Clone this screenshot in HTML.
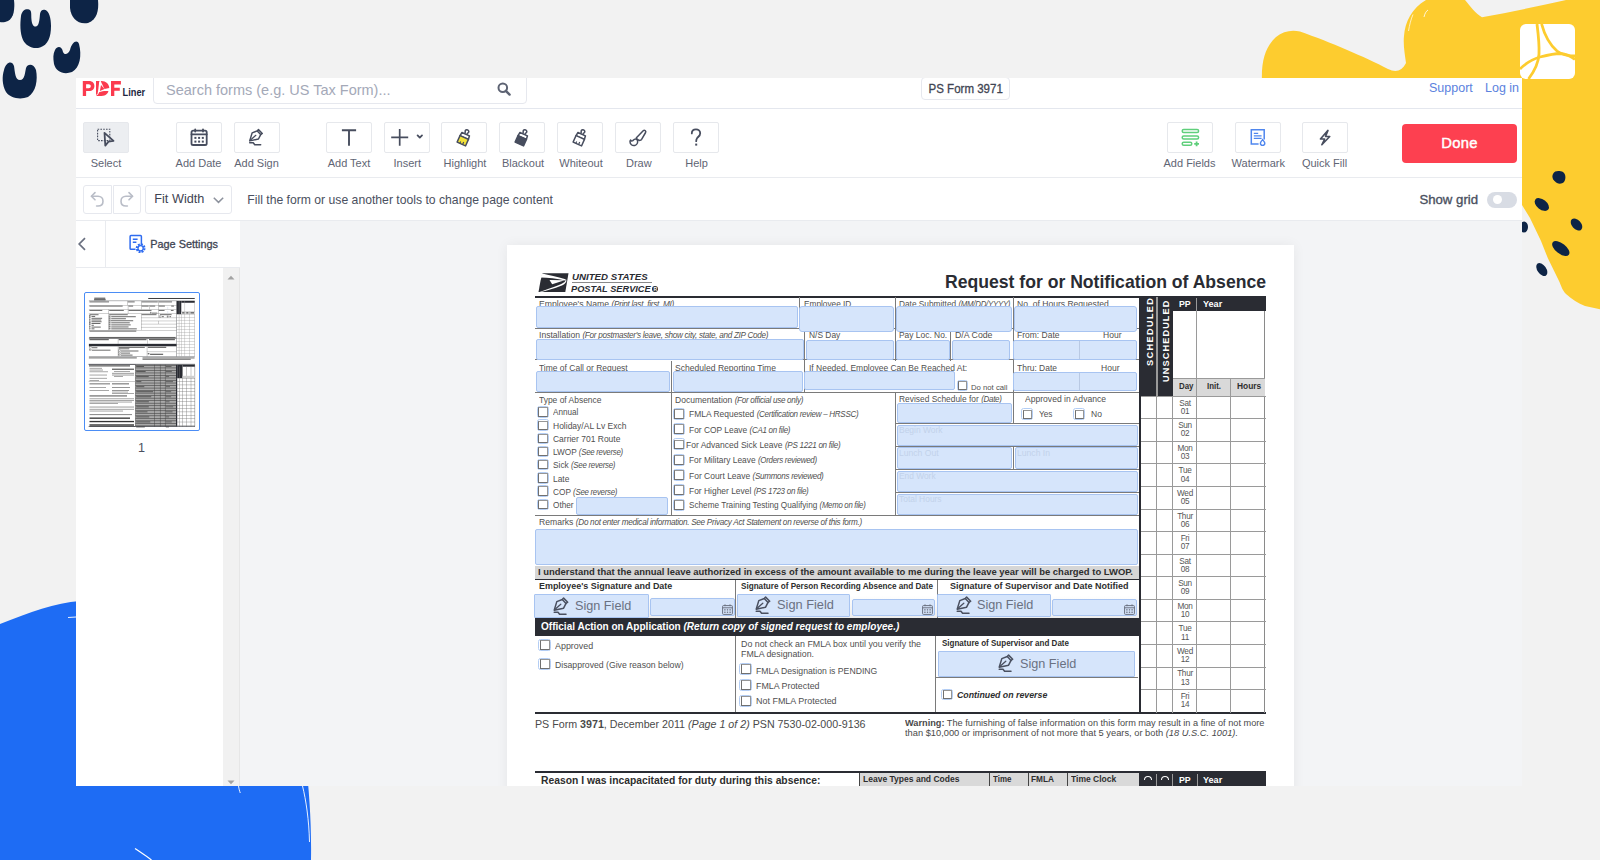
<!DOCTYPE html>
<html><head><meta charset="utf-8">
<style>
*{box-sizing:border-box;margin:0;padding:0}
html,body{width:1600px;height:860px;overflow:hidden}
body{background:#f2f2f2;position:relative;font-family:"Liberation Sans",sans-serif;color:#333}
.abs{position:absolute}
.a{position:absolute}
.t{position:absolute;white-space:nowrap;transform-origin:0 0}
#deco{position:absolute;left:0;top:0;width:1600px;height:860px}
#app{position:absolute;left:76px;top:78px;width:1446px;height:708px;background:#fff;overflow:hidden}
#hdr{position:absolute;left:0;top:0;width:1446px;height:31px;border-bottom:1px solid #e4e7ee}
#tb{position:absolute;left:0;top:31px;width:1446px;height:69px;border-bottom:1px solid #e9ebef}
#stb{position:absolute;left:0;top:100px;width:1446px;height:43px;border-bottom:1px solid #e9ebef}
#side{position:absolute;left:0;top:143px;width:164px;height:565px;background:#fff}
#main{position:absolute;left:164px;top:143px;width:1282px;height:565px;background:#f3f4f6;overflow:hidden}
.btn{position:absolute;top:13px;width:46px;height:31px;border:1px solid #e6e8ec;border-radius:2px;background:#fff}
.lbl{position:absolute;top:48px;font-size:11px;line-height:13px;color:#5f6574;white-space:nowrap;text-align:center}
.ico{position:absolute;left:-1px;top:-1px}
</style></head><body>
<svg id="deco" viewBox="0 0 1600 860">
  <!-- navy blobs top-left -->
  <g fill="#0d2446">
    <path d="M0 0 L14 0 C15 8 14 18 8 21 C4 23 0 22 0 22 Z"/>
    <path d="M21 16 C22 10 26 8.5 29 9.5 C32 10.5 31 14 31.5 20 C32 25 34 27 36 26.5 C39 26 39.5 20 40 14 C40.5 10 43 9 45.5 10 C49 11.5 51 18 51 26 C51 37 48 45 40 47.5 C33 49.5 26 46 23 40 C20 33 20 24 21 16 Z"/>
    <path d="M70 0 L98 0 C99 10 97 20 88 23 C78 25 71 18 70 8 Z"/>
    <path d="M55 50 C58 45 62 47 63 52 C64 55 68 55 70 50 C72 42 77 39 79 44 C82 55 80 68 72 72 C64 75 56 72 54 64 C53 58 53 54 55 50 Z"/>
    <path d="M4 70 C6 62 12 60 14 66 C15 72 15 80 20 80 C25 80 25 72 26 68 C28 63 34 64 36 70 C38 80 36 92 28 97 C20 100 10 98 6 92 C2 85 2 76 4 70 Z"/>
  </g>
  <!-- yellow blob top-right -->
  <path fill="#fdcc2f" d="M1262 82 C1261 60 1266 46 1276 37 C1283 31 1292 29.5 1300 31.5 C1330 42 1365 57 1388 69 C1396 73 1402 71 1406 63 C1405 55 1403 45 1404 36 C1405 22 1412 8 1426 0 L1465 0 C1470 6 1476 14 1482 17.2 C1510 12 1540 6 1566 0 L1600 0 L1600 309.3 L1585 306 C1578 303 1572 299.5 1566 294 C1562 290 1561 285 1559 281 L1548 258.6 L1541 241 L1530 218 L1522 205 L1522 82 Z"/>
  <path d="M1413 14.5 C1411 19 1409.5 25 1408.5 31" stroke="#fff" stroke-width="0.7" fill="none"/>
  <path d="M1428 10 C1426 11.5 1425 13 1424 17" stroke="#fff" stroke-width="0.8" fill="none"/>
  <!-- white pdf square -->
  <g transform="translate(1520 24)">
    <rect x="0" y="0" width="55" height="55" rx="6" fill="#fff"/>
    <g stroke="#fdcc2f" stroke-width="2.8" fill="none">
      <path d="M17 0 C18 8 19.5 20 19 30 C18.5 40 13 49 8.5 55"/>
      <path d="M21.6 0 C24 9 29 20 37 27 C42 31 48 32 55 32"/>
      <path d="M0 45 C6 39 13 35 20 33 C28 31 35 29.5 40 29.5 C46 30 51 32 55 35.5"/>
    </g>
  </g>
  <!-- navy dots right -->
  <g fill="#0d2446">
    <path d="M1553 174 C1555 170 1560 171 1563 172 C1566 174 1566 179 1564 182 C1562 184 1559 184 1557 183 C1554 181 1551 178 1553 174 Z"/>
    <ellipse cx="1541.8" cy="204.5" rx="8.2" ry="5" transform="rotate(38 1541.8 204.5)"/>
    <ellipse cx="1576.5" cy="224.5" rx="7" ry="4.6" transform="rotate(48 1576.5 224.5)"/>
    <ellipse cx="1560.8" cy="248.5" rx="10.2" ry="5.2" transform="rotate(38 1560.8 248.5)"/>
    <ellipse cx="1541.8" cy="269.5" rx="7.4" ry="4.4" transform="rotate(55 1541.8 269.5)"/>
    <ellipse cx="1524" cy="227" rx="4" ry="5.5"/>
  </g>
  <!-- blue blob bottom-left -->
  <path fill="#1e6cf4" d="M0 624 C30 612 55 603 80 601 L300 700 C305 760 312 800 311 860 L0 860 Z"/>
  <g stroke="#fff" fill="none" stroke-width="0.9">
    <path d="M68 617.5 L76 617"/>
    <path d="M302.5 786 C306 800 309 820 309.5 842"/>
    <path d="M238.5 786 C239 789 239.5 791 240.3 793"/>
    <path d="M135 848.5 C140 852 146 856 151.5 860" stroke-width="1.2"/>
  </g>
</svg>

<div id="app">
  <div id="hdr">
    <div class="abs" style="left:6px;top:2px;width:66px;height:18px">
      <svg width="66" height="18" viewBox="0 0 66 18">
        <g fill="#fb3a4e">
          <path d="M0.8 1 H7 C10.6 1 12.4 3.2 12.4 6 C12.4 9 10.4 11.1 7 11.1 H4.1 V16 H0.8 Z M4.1 4.3 V8.2 H6.6 C8 8.2 8.8 7.4 8.8 6.2 C8.8 5 8 4.3 6.6 4.3 Z"/>
          <path d="M14 1 H17 L17.2 1.2 C16.8 6 16.2 10.5 15.6 13.6 L14 15.2 Z"/>
          <path d="M14 16 L16.2 14.2 C16.6 13.4 17 12.6 17.4 12 C20 11 24 10.6 26.4 11.1 C26 13.5 24 16 19.5 16 Z"/>
          <path d="M19.5 1 C24 1 27 4 27.3 8 L22.5 9 C20.8 6 19.6 3.2 18.8 1.1 Z"/>
          <path d="M19 5 L22.5 9 L17.9 11.1 Z"/>
          <path d="M29 1 H38.9 V4.5 H32.3 V7.8 H37.8 V10.7 H32.3 V16 H29 Z"/>
        </g>
        <text x="40.6" y="15.7" font-family="Liberation Sans" font-weight="bold" font-size="10.2" fill="#1d2640" textLength="22.5" lengthAdjust="spacingAndGlyphs">Liner</text>
      </svg>
    </div>
    <div class="abs" style="left:77px;top:-6px;width:374px;height:32px;border:1px solid #e6e8ee;border-radius:4px;background:#fff"></div>
    <div class="abs" style="left:90px;top:4px;font-size:14.5px;color:#a4a9b8;white-space:nowrap">Search forms (e.g. US Tax Form)...</div>
    <svg class="abs" style="left:421px;top:4px" width="14" height="14" viewBox="0 0 14 14"><circle cx="5.8" cy="5.8" r="4.3" stroke="#5d6373" stroke-width="2" fill="none"/><path d="M8.8 8.8 L12.6 12.6" stroke="#5d6373" stroke-width="2.4" stroke-linecap="round"/></svg>
    <div class="abs" style="left:845px;top:-1px;width:89px;height:23px;border:1px solid #e6e8ee;border-radius:4px;background:#fff;font-size:12px;-webkit-text-stroke:0.3px #3f4553;color:#3f4553;text-align:center;line-height:22px"><span style="display:inline-block;transform:scaleX(0.96)">PS Form 3971</span></div>
    <div class="abs" style="left:1353px;top:3px;font-size:12.5px;color:#5b82de;white-space:nowrap">Support</div>
    <div class="abs" style="left:1409px;top:3px;font-size:12.5px;color:#5b82de;white-space:nowrap">Log in</div>
  </div>
  <div id="tb">
    <div class="btn" style="left:7px;background:#eceef1"><svg class="ico" width="46" height="31" viewBox="0 0 46 31"><rect x="14.6" y="7.2" width="12.2" height="11.4" stroke="#474d5e" stroke-width="1.1" stroke-dasharray="1.6 1.2" fill="none"/><path d="M21.5 10.8 L30.5 18.8 L25.5 19.6 L22.3 23.6 Z" stroke="#474d5e" fill="none" stroke-width="1.8" stroke-linecap="round" stroke-linejoin="round" stroke-width="1.9" fill="#eceef2"/></svg></div>
    <div class="lbl" style="left:-10.0px;width:80px">Select</div>
    <div class="btn" style="left:99.5px;background:#fff"><svg class="ico" width="46" height="31" viewBox="0 0 46 31"><rect x="15.5" y="8.6" width="15.2" height="14.4" rx="1.6" stroke="#474d5e" fill="none" stroke-width="1.8" stroke-linecap="round" stroke-linejoin="round"/><path d="M15.5 12.3 H30.7" stroke="#474d5e" fill="none" stroke-width="1.8" stroke-linecap="round" stroke-linejoin="round" stroke-width="1.4"/><path d="M19.2 7.3 V9.5 M27 7.3 V9.5" stroke="#474d5e" fill="none" stroke-width="1.8" stroke-linecap="round" stroke-linejoin="round" stroke-width="1.4"/><g fill="#474d5e"><rect x="18.4" y="14.9" width="2" height="2"/><rect x="22.1" y="14.9" width="2" height="2"/><rect x="25.8" y="14.9" width="2" height="2"/><rect x="18.4" y="18.6" width="2" height="2"/><rect x="22.1" y="18.6" width="2" height="2"/><rect x="25.8" y="18.6" width="2" height="2"/></g></svg></div>
    <div class="lbl" style="left:82.5px;width:80px">Add Date</div>
    <div class="btn" style="left:157.5px;background:#fff"><svg class="ico" width="46" height="31" viewBox="0 0 46 31"><g transform="translate(14.6 6.6) scale(0.93)" fill="none" stroke="#474d5e" stroke-linecap="round" stroke-linejoin="round" stroke-width="1.6"><path d="M1.2 13.2 L3.8 4.6 L9.3 2.5 L10.6 1.1 L14.7 5.2 L13 6.4 L10.6 11.2 Z"/><path d="M9.3 2.5 L13 6.4"/><path d="M1.8 12.6 L7.8 7.2" stroke-width="1.3"/><path d="M1.2 15.2 H5 L6.6 17.3 H13"/></g></svg></div>
    <div class="lbl" style="left:140.5px;width:80px">Add Sign</div>
    <div class="btn" style="left:250px;background:#fff"><svg class="ico" width="46" height="31" viewBox="0 0 46 31"><path d="M15.9 8.2 H30.1 M23 8.2 V23.8" stroke="#474d5e" stroke-width="1.9" fill="none"/></svg></div>
    <div class="lbl" style="left:233.0px;width:80px">Add Text</div>
    <div class="btn" style="left:308.3px;background:#fff"><svg class="ico" width="46" height="31" viewBox="0 0 46 31"><path d="M7.2 15.4 H24.2 M15.7 7 V23.8" stroke="#474d5e" stroke-width="1.7" fill="none"/><path d="M33.6 13.4 L35.8 15.6 L38 13.4" stroke="#474d5e" fill="none" stroke-width="1.8" stroke-linecap="round" stroke-linejoin="round" stroke-width="1.5"/></svg></div>
    <div class="lbl" style="left:291.3px;width:80px">Insert</div>
    <div class="btn" style="left:365.2px;background:#fff"><svg class="ico" width="46" height="31" viewBox="0 0 46 31"><g transform="rotate(24 23 16)"><path d="M21.8 11.6 V10 C20.9 9.4 20.9 7.8 22.4 7.3 C23.8 6.9 25.2 7.8 24.9 9.2 C24.8 9.6 24.6 9.9 24.3 10 V11.6" stroke="#474d5e" stroke-width="1.5" stroke-linecap="round" stroke-linejoin="round" fill="none"/><path d="M18.9 11.8 H27.1 L27.6 15.4 H18.4 Z" stroke="#474d5e" stroke-width="1.5" stroke-linecap="round" stroke-linejoin="round" fill="#fff"/><path d="M18.4 15.4 H27.6 V22.6 H18.4 Z" stroke="#474d5e" stroke-width="1.5" stroke-linecap="round" stroke-linejoin="round" fill="#f2e23a"/><path d="M21.4 22.6 V20.6 M24.4 22.6 V19.8" stroke="#474d5e" stroke-width="1.2"/></g></svg></div>
    <div class="lbl" style="left:349.0px;width:80px">Highlight</div>
    <div class="btn" style="left:423.2px;background:#fff"><svg class="ico" width="46" height="31" viewBox="0 0 46 31"><g transform="rotate(24 23 16)"><path d="M21.8 11.6 V10 C20.9 9.4 20.9 7.8 22.4 7.3 C23.8 6.9 25.2 7.8 24.9 9.2 C24.8 9.6 24.6 9.9 24.3 10 V11.6" stroke="#474d5e" stroke-width="1.5" stroke-linecap="round" stroke-linejoin="round" fill="none"/><path d="M18.9 11.8 H27.1 L27.6 15.4 H18.4 Z" stroke="#474d5e" stroke-width="1.5" stroke-linecap="round" stroke-linejoin="round" fill="#fff"/><path d="M18.4 15.4 H27.6 V22.6 H18.4 Z" stroke="#474d5e" stroke-width="1.5" stroke-linecap="round" stroke-linejoin="round" fill="#474d5e"/></g></svg></div>
    <div class="lbl" style="left:407.0px;width:80px">Blackout</div>
    <div class="btn" style="left:481.2px;background:#fff"><svg class="ico" width="46" height="31" viewBox="0 0 46 31"><g transform="rotate(24 23 16)"><path d="M21.8 11.6 V10 C20.9 9.4 20.9 7.8 22.4 7.3 C23.8 6.9 25.2 7.8 24.9 9.2 C24.8 9.6 24.6 9.9 24.3 10 V11.6" stroke="#474d5e" stroke-width="1.5" stroke-linecap="round" stroke-linejoin="round" fill="none"/><path d="M18.9 11.8 H27.1 L27.6 15.4 H18.4 Z" stroke="#474d5e" stroke-width="1.5" stroke-linecap="round" stroke-linejoin="round" fill="#fff"/><path d="M18.4 15.4 H27.6 V22.6 H18.4 Z" stroke="#474d5e" stroke-width="1.5" stroke-linecap="round" stroke-linejoin="round" fill="#fff"/><path d="M21.4 22.6 V20.6 M24.4 22.6 V19.8" stroke="#474d5e" stroke-width="1.2"/></g></svg></div>
    <div class="lbl" style="left:465.0px;width:80px">Whiteout</div>
    <div class="btn" style="left:539.2px;background:#fff"><svg class="ico" width="46" height="31" viewBox="0 0 46 31"><path d="M21.4 15.8 L28.2 8.8 C29.4 7.6 31.4 8.8 30.6 10.5 L26.6 17.3 C25.8 18.5 24.2 18.7 23.2 17.9 L21.8 16.9 Z" stroke="#474d5e" fill="none" stroke-width="1.5" stroke-linejoin="round"/><path d="M22.2 17.8 C23.2 19.8 22.6 22.8 19.8 23.4 C17.2 24 15 22.2 15 19.8 C15 19 15.2 18.4 15.6 18 C16 19 17 19.2 17.8 18.6 C18.6 17.8 19.4 17 20.6 17 C21.2 17 21.8 17.3 22.2 17.8 Z" stroke="#474d5e" fill="none" stroke-width="1.5" stroke-linejoin="round"/></svg></div>
    <div class="lbl" style="left:522.8px;width:80px">Draw</div>
    <div class="btn" style="left:597px;background:#fff"><svg class="ico" width="46" height="31" viewBox="0 0 46 31"><path d="M18.8 11.4 C18.8 8.6 20.6 7.4 23 7.4 C25.4 7.4 27.2 9 27.2 11.2 C27.2 13.8 25.4 14.6 24.2 16 C23.4 17 23.2 18 23.2 19.2" stroke="#474d5e" stroke-width="1.8" fill="none" stroke-linecap="round"/><rect x="22.2" y="21.6" width="2" height="2" fill="#474d5e"/></svg></div>
    <div class="lbl" style="left:580.6px;width:80px">Help</div>
    <div class="btn" style="left:1090.5px;background:#fff"><svg class="ico" width="46" height="31" viewBox="0 0 46 31"><g stroke="#5fcf7b" stroke-width="1.5" fill="none"><rect x="15.2" y="7.6" width="16.4" height="3" rx="1.5"/><rect x="15.2" y="13.9" width="16.4" height="3" rx="1.5"/><rect x="15.2" y="20.2" width="9.6" height="3" rx="1.5"/></g><path d="M29.6 19.4 V24.2 M27.2 21.8 H32" stroke="#5fcf7b" stroke-width="1.8"/></svg></div>
    <div class="lbl" style="left:1073.5px;width:80px">Add Fields</div>
    <div class="btn" style="left:1159.3px;background:#fff"><svg class="ico" width="46" height="31" viewBox="0 0 46 31"><path d="M29.2 17.6 V7.7 H16.3 V22 H23.6" stroke="#4f86ee" stroke-width="1.5" fill="none"/><path d="M18.8 11.4 H23.2 M18.8 13.9 H26.6 M18.8 16.4 H26.6" stroke="#4f86ee" stroke-width="1.2"/><path d="M27.6 17.6 C29 19.2 29.8 20.2 29.8 21.3 C29.8 22.6 28.8 23.4 27.6 23.4 C26.4 23.4 25.4 22.6 25.4 21.3 C25.4 20.2 26.2 19.2 27.6 17.6 Z" stroke="#4f86ee" stroke-width="1.4" fill="#fff"/></svg></div>
    <div class="lbl" style="left:1142.3px;width:80px">Watermark</div>
    <div class="btn" style="left:1225.5px;background:#fff"><svg class="ico" width="46" height="31" viewBox="0 0 46 31"><path transform="translate(23 15.5) scale(0.88) translate(-23 -15.5)" d="M26.4 7.4 L17.8 17.2 H22.6 L19.4 23.8 L28.4 14.4 H23.6 Z" stroke="#474d5e" fill="none" stroke-width="1.8" stroke-linecap="round" stroke-linejoin="round" stroke-width="1.35"/></svg></div>
    <div class="lbl" style="left:1208.5px;width:80px">Quick Fill</div>
    <div class="abs" style="left:1325.9px;top:15.1px;width:115.3px;height:38.7px;background:#fd4050;border-radius:4px;color:#fff;font-size:14.8px;letter-spacing:0.3px;-webkit-text-stroke:0.45px #fff;text-align:center;line-height:38px">Done</div>
  </div>
  <div id="stb">
    <div class="abs" style="left:7px;top:7px;width:29px;height:29.3px;border:1px solid #e6e8ee;border-radius:3px 0 0 3px"></div>
    <div class="abs" style="left:36.5px;top:7px;width:28px;height:29.3px;border:1px solid #e6e8ee;border-radius:0 3px 3px 0"></div>
    <svg class="abs" style="left:13px;top:12px" width="18" height="18" viewBox="0 0 18 18"><path d="M6 2.6 L2.4 6.2 L6 9.8" stroke="#b9bdc7" stroke-width="1.6" fill="none" stroke-linecap="round" stroke-linejoin="round"/><path d="M2.6 6.2 H9 C12 6.2 14 8.4 14 11.2 C14 14 12 16 9 16 H7.6" stroke="#b9bdc7" stroke-width="1.6" fill="none" stroke-linecap="round"/></svg>
    <svg class="abs" style="left:41px;top:12px" width="18" height="18" viewBox="0 0 18 18"><path d="M12 2.6 L15.6 6.2 L12 9.8" stroke="#b9bdc7" stroke-width="1.6" fill="none" stroke-linecap="round" stroke-linejoin="round"/><path d="M15.4 6.2 H9 C6 6.2 4 8.4 4 11.2 C4 14 6 16 9 16 H10.4" stroke="#b9bdc7" stroke-width="1.6" fill="none" stroke-linecap="round"/></svg>
    <div class="abs" style="left:69.3px;top:7px;width:86.8px;height:29.3px;border:1px solid #e6e8ee;border-radius:3px"></div>
    <div class="abs" style="left:78.3px;top:13px;font-size:12.7px;line-height:16px;color:#3f4553;white-space:nowrap">Fit Width</div>
    <svg class="abs" style="left:137px;top:19px" width="11" height="7" viewBox="0 0 11 7"><path d="M0.8 0.8 L5.5 5.4 L10.2 0.8" stroke="#8d929d" stroke-width="1.5" fill="none"/></svg>
    <div class="abs" style="left:171.3px;top:13.5px;font-size:12.2px;line-height:16px;color:#4a5060;white-space:nowrap">Fill the form or use another tools to change page content</div>
    <div class="abs" style="left:1343.4px;top:13.5px;font-size:13.2px;line-height:16px;-webkit-text-stroke:0.35px #4a5060;color:#4a5060;white-space:nowrap">Show grid</div>
    <div class="abs" style="left:1410.6px;top:14px;width:30.4px;height:15.5px;border-radius:8px;background:#d8dce4"><div class="abs" style="left:6px;top:3.1px;width:9.3px;height:9.3px;border-radius:50%;background:#fff"></div></div>
  </div>
  <div id="side">
    <div class="abs" style="left:0;top:0;width:164px;height:47px;border-bottom:1px solid #e9ebef"></div>
    <div class="abs" style="left:29px;top:0;width:1px;height:47px;background:#e9ebef"></div>
    <svg class="abs" style="left:1px;top:16px" width="10" height="14" viewBox="0 0 10 14"><path d="M8 1.2 L2.2 7 L8 12.8" stroke="#6a7080" stroke-width="1.7" fill="none"/></svg>
    <svg class="abs" style="left:53px;top:13px" width="20" height="20" viewBox="0 0 20 20">
      <path d="M12.4 11 V2.4 C12.4 1.9 12 1.5 11.5 1.5 H2 C1.5 1.5 1.1 1.9 1.1 2.4 V14.4 C1.1 14.9 1.5 15.3 2 15.3 H6.5" stroke="#2f6cf0" stroke-width="1.5" fill="none"/>
      <path d="M3.8 5.2 H8.6 M3.8 8.2 H7.4" stroke="#2f6cf0" stroke-width="1.4"/>
      <circle cx="11.6" cy="14.2" r="3.6" stroke="#2f6cf0" stroke-width="2.6" stroke-dasharray="1.8 1" fill="none"/>
      <circle cx="11.6" cy="14.2" r="2.6" stroke="#2f6cf0" stroke-width="1.3" fill="#fff"/>
    </svg>
    <div class="abs" style="left:74.2px;top:16.5px;font-size:10.9px;line-height:13px;-webkit-text-stroke:0.3px #3f4553;color:#3f4553;white-space:nowrap">Page Settings</div>
    <div class="abs" style="left:147.2px;top:47px;width:16.8px;height:518px;background:#f1f1f1;border-right:1px solid #e6e6e6"></div>
    <svg class="abs" style="left:151px;top:54px" width="8" height="5" viewBox="0 0 8 5"><path d="M0.5 4.5 L4 0.8 L7.5 4.5 Z" fill="#a3a3a3"/></svg>
    <svg class="abs" style="left:151px;top:558.5px" width="8" height="5" viewBox="0 0 8 5"><path d="M0.5 0.5 L4 4.2 L7.5 0.5 Z" fill="#a3a3a3"/></svg>
    <div class="abs" style="left:7.5px;top:71px;width:116.2px;height:139.2px;border:1.5px solid #4b8df5;border-radius:2px;background:#fff"><svg id="thumb" class="abs" style="left:3px;top:3px" width="108" height="130" viewBox="0 0 108 130"></svg></div>
    <div class="abs" style="left:60px;top:220px;width:11px;text-align:center;font-size:12.6px;line-height:14px;color:#4a5060">1</div>
  </div>
  <div id="main">
    <div id="page" class="abs" style="left:267px;top:24px;width:787px;height:600px;background:#fff;box-shadow:0 0 12px rgba(0,0,0,0.06)"></div>
  </div>
</div>
<!--TH--><svg style="position:absolute;left:85px;top:293.5px" width="114" height="137" viewBox="85 293.5 114 137"><rect x="94.29" y="297.19" width="10.95" height="1.00" fill="#333" opacity="0.95"/><rect x="94.26" y="298.36" width="11.59" height="0.35" fill="#8a8a8a" opacity="1"/><rect x="94.06" y="298.78" width="11.55" height="1.00" fill="#333" opacity="0.95"/><rect x="148.24" y="297.48" width="46.51" height="1.00" fill="#333" opacity="0.95"/><rect x="88.90" y="300.23" width="87.66" height="0.35" fill="#2a2c33" opacity="1"/><rect x="88.90" y="304.51" width="87.66" height="0.35" fill="#7a7a7a" opacity="1"/><rect x="88.90" y="308.66" width="87.66" height="0.35" fill="#7a7a7a" opacity="1"/><rect x="88.90" y="313.08" width="87.66" height="0.35" fill="#7a7a7a" opacity="1"/><rect x="127.15" y="300.37" width="0.35" height="4.28" fill="#7a7a7a" opacity="1"/><rect x="141.06" y="300.37" width="0.35" height="8.56" fill="#7a7a7a" opacity="1"/><rect x="141.06" y="313.13" width="0.35" height="16.47" fill="#7a7a7a" opacity="1"/><rect x="158.16" y="300.37" width="0.35" height="12.84" fill="#7a7a7a" opacity="1"/><rect x="127.88" y="304.65" width="0.35" height="8.56" fill="#7a7a7a" opacity="1"/><rect x="149.03" y="304.65" width="0.35" height="4.28" fill="#7a7a7a" opacity="1"/><rect x="108.61" y="308.93" width="0.35" height="20.67" fill="#7a7a7a" opacity="1"/><rect x="89.45" y="300.92" width="19.56" height="0.96" fill="#333" opacity="0.75"/><rect x="127.83" y="300.92" width="6.85" height="0.96" fill="#333" opacity="0.75"/><rect x="141.69" y="300.92" width="16.11" height="0.96" fill="#333" opacity="0.75"/><rect x="158.74" y="300.92" width="13.30" height="0.96" fill="#333" opacity="0.75"/><rect x="89.45" y="305.12" width="33.21" height="0.96" fill="#333" opacity="0.75"/><rect x="128.57" y="305.12" width="4.54" height="0.96" fill="#333" opacity="0.75"/><rect x="141.69" y="305.12" width="6.98" height="0.96" fill="#333" opacity="0.75"/><rect x="149.76" y="305.12" width="5.43" height="0.96" fill="#333" opacity="0.75"/><rect x="158.74" y="305.12" width="6.16" height="0.96" fill="#333" opacity="0.75"/><rect x="171.25" y="305.12" width="2.68" height="0.96" fill="#333" opacity="0.75"/><rect x="167.73" y="306.19" width="0.35" height="2.50" fill="#b9c9e3" opacity="1"/><rect x="89.45" y="309.45" width="12.85" height="0.96" fill="#333" opacity="0.75"/><rect x="109.19" y="309.45" width="14.63" height="0.96" fill="#333" opacity="0.75"/><rect x="128.57" y="309.45" width="22.92" height="0.96" fill="#333" opacity="0.75"/><rect x="158.74" y="309.45" width="5.80" height="0.96" fill="#333" opacity="0.75"/><rect x="170.88" y="309.45" width="2.68" height="0.96" fill="#333" opacity="0.75"/><rect x="167.73" y="310.54" width="0.35" height="2.31" fill="#b9c9e3" opacity="1"/><rect x="150.19" y="311.58" width="1.39" height="1.28" fill="none" stroke="#666" stroke-width="0.4"/><rect x="152.00" y="312.14" width="5.29" height="0.79" fill="#333" opacity="0.75"/><rect x="89.48" y="313.73" width="9.06" height="0.96" fill="#333" opacity="0.75"/><rect x="109.17" y="313.73" width="18.58" height="0.96" fill="#333" opacity="0.75"/><rect x="141.63" y="313.69" width="14.87" height="0.96" fill="#333" opacity="0.75"/><rect x="159.87" y="313.69" width="11.74" height="0.96" fill="#333" opacity="0.75"/><rect x="89.31" y="315.10" width="1.48" height="1.36" fill="none" stroke="#666" stroke-width="0.4"/><rect x="91.48" y="315.46" width="3.68" height="0.96" fill="#333" opacity="0.75"/><rect x="89.31" y="316.88" width="1.48" height="1.36" fill="none" stroke="#666" stroke-width="0.4"/><rect x="91.48" y="317.31" width="10.64" height="0.96" fill="#333" opacity="0.75"/><rect x="89.31" y="318.63" width="1.48" height="1.36" fill="none" stroke="#666" stroke-width="0.4"/><rect x="91.48" y="319.02" width="9.77" height="0.96" fill="#333" opacity="0.75"/><rect x="89.31" y="320.37" width="1.48" height="1.36" fill="none" stroke="#666" stroke-width="0.4"/><rect x="91.48" y="320.77" width="10.11" height="0.96" fill="#333" opacity="0.75"/><rect x="89.31" y="322.12" width="1.48" height="1.36" fill="none" stroke="#666" stroke-width="0.4"/><rect x="91.48" y="322.52" width="9.01" height="0.96" fill="#333" opacity="0.75"/><rect x="89.31" y="323.93" width="1.48" height="1.36" fill="none" stroke="#666" stroke-width="0.4"/><rect x="91.48" y="324.30" width="2.38" height="0.96" fill="#333" opacity="0.75"/><rect x="89.31" y="325.68" width="1.48" height="1.36" fill="none" stroke="#666" stroke-width="0.4"/><rect x="91.48" y="326.11" width="9.29" height="0.96" fill="#333" opacity="0.75"/><rect x="89.31" y="327.49" width="1.48" height="1.36" fill="none" stroke="#666" stroke-width="0.4"/><rect x="91.48" y="327.86" width="2.98" height="0.96" fill="#333" opacity="0.75"/><rect x="109.04" y="315.35" width="1.51" height="1.39" fill="none" stroke="#666" stroke-width="0.4"/><rect x="111.23" y="315.73" width="24.55" height="0.96" fill="#333" opacity="0.75"/><rect x="109.04" y="317.36" width="1.51" height="1.39" fill="none" stroke="#666" stroke-width="0.4"/><rect x="111.23" y="317.76" width="14.66" height="0.96" fill="#333" opacity="0.75"/><rect x="109.04" y="319.42" width="1.51" height="1.39" fill="none" stroke="#666" stroke-width="0.4"/><rect x="110.82" y="319.77" width="22.37" height="0.96" fill="#333" opacity="0.75"/><rect x="109.04" y="321.45" width="1.51" height="1.39" fill="none" stroke="#666" stroke-width="0.4"/><rect x="111.23" y="321.83" width="18.52" height="0.96" fill="#333" opacity="0.75"/><rect x="109.04" y="323.49" width="1.51" height="1.39" fill="none" stroke="#666" stroke-width="0.4"/><rect x="111.23" y="323.90" width="19.49" height="0.96" fill="#333" opacity="0.75"/><rect x="109.04" y="325.52" width="1.51" height="1.39" fill="none" stroke="#666" stroke-width="0.4"/><rect x="111.23" y="325.96" width="17.32" height="0.96" fill="#333" opacity="0.75"/><rect x="109.04" y="327.53" width="1.51" height="1.39" fill="none" stroke="#666" stroke-width="0.4"/><rect x="111.23" y="327.88" width="25.57" height="0.96" fill="#333" opacity="0.75"/><rect x="141.06" y="317.23" width="35.50" height="0.35" fill="#7a7a7a" opacity="1"/><rect x="141.06" y="320.30" width="35.50" height="0.35" fill="#7a7a7a" opacity="1"/><rect x="141.06" y="323.38" width="35.50" height="0.35" fill="#7a7a7a" opacity="1"/><rect x="141.06" y="326.46" width="35.50" height="0.35" fill="#7a7a7a" opacity="1"/><rect x="158.16" y="313.21" width="0.35" height="4.15" fill="#7a7a7a" opacity="1"/><rect x="158.16" y="320.38" width="0.35" height="3.09" fill="#7a7a7a" opacity="1"/><rect x="159.54" y="315.39" width="1.45" height="1.34" fill="none" stroke="#666" stroke-width="0.4"/><rect x="161.87" y="315.70" width="1.96" height="0.96" fill="#333" opacity="0.75"/><rect x="167.07" y="315.39" width="1.45" height="1.34" fill="none" stroke="#666" stroke-width="0.4"/><rect x="169.46" y="315.70" width="1.58" height="0.96" fill="#333" opacity="0.75"/><rect x="88.90" y="329.54" width="87.66" height="0.35" fill="#7a7a7a" opacity="1"/><rect x="89.48" y="330.16" width="46.80" height="0.96" fill="#333" opacity="0.75"/><rect x="88.90" y="336.29" width="87.66" height="1.81" fill="#d6d6d6" opacity="1"/><rect x="88.90" y="338.10" width="87.66" height="0.35" fill="#2a2c33" opacity="1"/><rect x="89.31" y="336.76" width="86.22" height="1.00" fill="#333" opacity="0.95"/><rect x="117.88" y="338.23" width="0.35" height="5.08" fill="#7a7a7a" opacity="1"/><rect x="147.15" y="338.23" width="0.35" height="5.08" fill="#7a7a7a" opacity="1"/><rect x="89.47" y="338.71" width="19.32" height="0.96" fill="#333" opacity="0.95"/><rect x="118.68" y="338.71" width="27.84" height="0.96" fill="#333" opacity="0.95"/><rect x="149.02" y="338.71" width="25.88" height="0.96" fill="#333" opacity="0.95"/><rect x="88.90" y="343.34" width="87.66" height="2.44" fill="#2a2c33" opacity="1"/><rect x="89.58" y="346.26" width="1.52" height="1.40" fill="none" stroke="#666" stroke-width="0.4"/><rect x="91.86" y="346.74" width="5.52" height="0.96" fill="#333" opacity="0.75"/><rect x="89.58" y="348.75" width="1.52" height="1.40" fill="none" stroke="#666" stroke-width="0.4"/><rect x="91.86" y="349.20" width="18.63" height="0.96" fill="#333" opacity="0.75"/><rect x="117.88" y="345.78" width="0.35" height="10.25" fill="#7a7a7a" opacity="1"/><rect x="146.86" y="345.78" width="0.35" height="10.25" fill="#7a7a7a" opacity="1"/><rect x="118.75" y="346.41" width="26.08" height="0.96" fill="#333" opacity="0.75"/><rect x="118.75" y="347.81" width="10.58" height="0.96" fill="#333" opacity="0.75"/><rect x="118.68" y="349.44" width="1.52" height="1.40" fill="none" stroke="#666" stroke-width="0.4"/><rect x="120.88" y="350.02" width="17.58" height="0.96" fill="#333" opacity="0.75"/><rect x="118.68" y="351.56" width="1.52" height="1.40" fill="none" stroke="#666" stroke-width="0.4"/><rect x="120.88" y="352.12" width="9.20" height="0.96" fill="#333" opacity="0.75"/><rect x="118.68" y="353.74" width="1.52" height="1.40" fill="none" stroke="#666" stroke-width="0.4"/><rect x="120.88" y="354.13" width="11.68" height="0.96" fill="#333" opacity="0.75"/><rect x="147.82" y="346.32" width="18.40" height="0.92" fill="#333" opacity="0.95"/><rect x="146.93" y="351.21" width="29.34" height="0.35" fill="#7a7a7a" opacity="1"/><rect x="147.92" y="352.90" width="1.45" height="1.34" fill="none" stroke="#666" stroke-width="0.4"/><rect x="150.05" y="353.27" width="13.08" height="0.98" fill="#333" opacity="0.95"/><rect x="88.90" y="355.89" width="105.85" height="0.35" fill="#2a2c33" opacity="1"/><rect x="176.42" y="300.23" width="0.35" height="55.79" fill="#2a2c33" opacity="1"/><rect x="176.71" y="300.23" width="4.58" height="13.42" fill="#2a2c33" opacity="1"/><rect x="178.88" y="300.37" width="0.35" height="13.29" fill="#9a9a9a" opacity="1"/><rect x="181.29" y="300.23" width="13.48" height="2.03" fill="#2a2c33" opacity="1"/><rect x="184.68" y="300.43" width="0.35" height="1.83" fill="#9a9a9a" opacity="1"/><rect x="184.68" y="302.24" width="0.35" height="9.07" fill="#9a9a9a" opacity="1"/><rect x="194.53" y="302.24" width="0.35" height="53.79" fill="#8a8a8a" opacity="1"/><rect x="181.29" y="311.31" width="13.39" height="2.34" fill="#d9d9d9" opacity="1"/><rect x="181.29" y="311.20" width="13.46" height="0.35" fill="#9a9a9a" opacity="1"/><rect x="184.68" y="311.31" width="0.35" height="44.72" fill="#9a9a9a" opacity="1"/><rect x="189.61" y="311.31" width="0.35" height="44.72" fill="#9a9a9a" opacity="1"/><rect x="181.20" y="313.65" width="0.35" height="42.37" fill="#9a9a9a" opacity="1"/><rect x="178.88" y="313.65" width="0.35" height="42.37" fill="#9a9a9a" opacity="1"/><rect x="176.71" y="313.61" width="18.04" height="0.35" fill="#9a9a9a" opacity="1"/><rect x="176.71" y="316.56" width="18.04" height="0.35" fill="#9a9a9a" opacity="1"/><rect x="176.71" y="319.63" width="18.04" height="0.35" fill="#9a9a9a" opacity="1"/><rect x="176.71" y="322.58" width="18.04" height="0.35" fill="#9a9a9a" opacity="1"/><rect x="176.71" y="325.66" width="18.04" height="0.35" fill="#9a9a9a" opacity="1"/><rect x="176.71" y="328.73" width="18.04" height="0.35" fill="#9a9a9a" opacity="1"/><rect x="176.71" y="331.68" width="18.04" height="0.35" fill="#9a9a9a" opacity="1"/><rect x="176.71" y="334.75" width="18.04" height="0.35" fill="#9a9a9a" opacity="1"/><rect x="176.71" y="337.70" width="18.04" height="0.35" fill="#9a9a9a" opacity="1"/><rect x="176.71" y="340.77" width="18.04" height="0.35" fill="#9a9a9a" opacity="1"/><rect x="176.71" y="343.72" width="18.04" height="0.35" fill="#9a9a9a" opacity="1"/><rect x="176.71" y="346.80" width="18.04" height="0.35" fill="#9a9a9a" opacity="1"/><rect x="176.71" y="349.87" width="18.04" height="0.35" fill="#9a9a9a" opacity="1"/><rect x="176.71" y="352.82" width="18.04" height="0.35" fill="#9a9a9a" opacity="1"/><rect x="182.19" y="311.89" width="2.10" height="0.96" fill="#333" opacity="0.95"/><rect x="186.30" y="311.89" width="2.03" height="0.96" fill="#333" opacity="0.95"/><rect x="190.55" y="311.89" width="3.51" height="0.96" fill="#333" opacity="0.95"/><rect x="88.90" y="356.89" width="47.89" height="1.00" fill="#333" opacity="0.75"/><rect x="142.51" y="356.96" width="52.09" height="0.95" fill="#333" opacity="0.75"/><rect x="142.51" y="358.30" width="48.25" height="0.95" fill="#333" opacity="0.75"/><rect x="88.60" y="363.40" width="106.40" height="0.80" fill="#2a2c33" opacity="1"/><rect x="89.00" y="364.90" width="41.00" height="0.99" fill="#333" opacity="1"/><rect x="89.50" y="367.40" width="12.50" height="0.66" fill="#333" opacity="0.65"/><rect x="89.50" y="369.20" width="13.50" height="0.66" fill="#333" opacity="0.65"/><rect x="89.50" y="371.00" width="18.50" height="0.66" fill="#333" opacity="0.65"/><rect x="89.50" y="374.20" width="17.50" height="0.66" fill="#333" opacity="0.65"/><rect x="112.00" y="368.20" width="22.00" height="0.99" fill="#333" opacity="1"/><rect x="114.00" y="370.60" width="16.00" height="0.66" fill="#333" opacity="0.65"/><rect x="112.00" y="372.40" width="22.00" height="0.66" fill="#333" opacity="0.7150000000000001"/><rect x="112.00" y="374.20" width="22.00" height="0.66" fill="#333" opacity="0.7150000000000001"/><rect x="114.00" y="375.60" width="9.00" height="0.66" fill="#333" opacity="0.65"/><rect x="89.50" y="377.40" width="17.50" height="0.66" fill="#333" opacity="0.65"/><rect x="89.50" y="379.60" width="9.50" height="0.66" fill="#333" opacity="0.65"/><rect x="89.50" y="383.00" width="20.50" height="0.77" fill="#333" opacity="0.9099999999999999"/><rect x="112.00" y="383.00" width="17.00" height="0.77" fill="#333" opacity="0.9750000000000001"/><rect x="89.50" y="386.80" width="16.50" height="0.66" fill="#333" opacity="0.65"/><rect x="112.00" y="386.80" width="18.00" height="0.66" fill="#333" opacity="0.78"/><rect x="89.50" y="389.60" width="19.50" height="0.66" fill="#333" opacity="0.65"/><rect x="112.00" y="389.60" width="17.00" height="0.66" fill="#333" opacity="0.78"/><rect x="112.00" y="391.20" width="16.00" height="0.66" fill="#333" opacity="0.65"/><rect x="112.00" y="392.60" width="22.00" height="0.66" fill="#333" opacity="0.65"/><rect x="89.50" y="395.00" width="37.50" height="0.88" fill="#333" opacity="0.9750000000000001"/><rect x="89.50" y="398.00" width="44.50" height="0.66" fill="#333" opacity="0.65"/><rect x="89.50" y="399.60" width="44.50" height="0.66" fill="#333" opacity="0.65"/><rect x="89.50" y="401.20" width="42.50" height="0.66" fill="#333" opacity="0.65"/><rect x="89.50" y="402.80" width="28.50" height="0.66" fill="#333" opacity="0.65"/><rect x="89.50" y="406.20" width="44.50" height="0.66" fill="#333" opacity="0.7150000000000001"/><rect x="89.50" y="408.40" width="44.50" height="0.66" fill="#333" opacity="0.65"/><rect x="89.50" y="410.20" width="33.50" height="0.66" fill="#333" opacity="0.65"/><rect x="89.50" y="413.80" width="42.50" height="0.77" fill="#333" opacity="0.78"/><rect x="89.50" y="417.00" width="40.50" height="1.32" fill="#333" opacity="1"/><rect x="89.50" y="420.40" width="44.50" height="1.32" fill="#333" opacity="1"/><rect x="89.50" y="423.80" width="44.50" height="1.43" fill="#333" opacity="1"/><rect x="89.50" y="425.80" width="45.50" height="0.66" fill="#333" opacity="0.78"/><rect x="88.60" y="381.10" width="46.90" height="0.40" fill="#555" opacity="0.8"/><rect x="135.50" y="364.20" width="40.50" height="61.80" fill="#a9a9a9" opacity="1"/><rect x="135.50" y="364.60" width="40.50" height="0.60" fill="#333" opacity="0.85"/><rect x="136.20" y="365.50" width="7.86" height="1.00" fill="#333" opacity="0.7"/><rect x="165.80" y="365.50" width="5.72" height="1.00" fill="#333" opacity="0.6"/><rect x="135.50" y="367.12" width="40.50" height="0.60" fill="#333" opacity="0.85"/><rect x="135.50" y="369.64" width="40.50" height="0.60" fill="#333" opacity="0.85"/><rect x="136.20" y="370.54" width="9.44" height="1.00" fill="#333" opacity="0.7"/><rect x="165.80" y="370.54" width="6.02" height="1.00" fill="#333" opacity="0.6"/><rect x="135.50" y="372.16" width="40.50" height="0.60" fill="#333" opacity="0.85"/><rect x="135.50" y="374.68" width="40.50" height="0.60" fill="#333" opacity="0.85"/><rect x="136.20" y="375.58" width="12.51" height="1.00" fill="#333" opacity="0.7"/><rect x="165.80" y="375.58" width="3.33" height="1.00" fill="#333" opacity="0.6"/><rect x="135.50" y="377.20" width="40.50" height="0.60" fill="#333" opacity="0.85"/><rect x="135.50" y="379.72" width="40.50" height="0.60" fill="#333" opacity="0.85"/><rect x="136.20" y="380.62" width="5.16" height="1.00" fill="#333" opacity="0.7"/><rect x="165.80" y="380.62" width="7.19" height="1.00" fill="#333" opacity="0.6"/><rect x="135.50" y="382.24" width="40.50" height="0.60" fill="#333" opacity="0.85"/><rect x="135.50" y="384.76" width="40.50" height="0.60" fill="#333" opacity="0.85"/><rect x="136.20" y="385.66" width="8.11" height="1.00" fill="#333" opacity="0.7"/><rect x="165.80" y="385.66" width="4.17" height="1.00" fill="#333" opacity="0.6"/><rect x="135.50" y="387.28" width="40.50" height="0.60" fill="#333" opacity="0.85"/><rect x="135.50" y="389.80" width="40.50" height="0.60" fill="#333" opacity="0.85"/><rect x="136.20" y="390.70" width="16.95" height="1.00" fill="#333" opacity="0.7"/><rect x="165.80" y="390.70" width="5.35" height="1.00" fill="#333" opacity="0.6"/><rect x="135.50" y="392.32" width="40.50" height="0.60" fill="#333" opacity="0.85"/><rect x="135.50" y="394.84" width="40.50" height="0.60" fill="#333" opacity="0.85"/><rect x="136.20" y="395.74" width="15.04" height="1.00" fill="#333" opacity="0.7"/><rect x="165.80" y="395.74" width="5.38" height="1.00" fill="#333" opacity="0.6"/><rect x="135.50" y="397.36" width="40.50" height="0.60" fill="#333" opacity="0.85"/><rect x="135.50" y="399.88" width="40.50" height="0.60" fill="#333" opacity="0.85"/><rect x="136.20" y="400.78" width="12.67" height="1.00" fill="#333" opacity="0.7"/><rect x="165.80" y="400.78" width="3.75" height="1.00" fill="#333" opacity="0.6"/><rect x="135.50" y="402.40" width="40.50" height="0.60" fill="#333" opacity="0.85"/><rect x="135.50" y="404.92" width="40.50" height="0.60" fill="#333" opacity="0.85"/><rect x="136.20" y="405.82" width="12.62" height="1.00" fill="#333" opacity="0.7"/><rect x="165.80" y="405.82" width="7.34" height="1.00" fill="#333" opacity="0.6"/><rect x="135.50" y="407.44" width="40.50" height="0.60" fill="#333" opacity="0.85"/><rect x="135.50" y="409.96" width="40.50" height="0.60" fill="#333" opacity="0.85"/><rect x="136.20" y="410.86" width="11.28" height="1.00" fill="#333" opacity="0.7"/><rect x="165.80" y="410.86" width="6.71" height="1.00" fill="#333" opacity="0.6"/><rect x="135.50" y="412.48" width="40.50" height="0.60" fill="#333" opacity="0.85"/><rect x="135.50" y="415.00" width="40.50" height="0.60" fill="#333" opacity="0.85"/><rect x="136.20" y="415.90" width="13.06" height="1.00" fill="#333" opacity="0.7"/><rect x="165.80" y="415.90" width="3.32" height="1.00" fill="#333" opacity="0.6"/><rect x="135.50" y="417.52" width="40.50" height="0.60" fill="#333" opacity="0.85"/><rect x="135.50" y="420.04" width="40.50" height="0.60" fill="#333" opacity="0.85"/><rect x="136.20" y="420.94" width="14.10" height="1.00" fill="#333" opacity="0.7"/><rect x="165.80" y="420.94" width="5.96" height="1.00" fill="#333" opacity="0.6"/><rect x="135.50" y="422.56" width="40.50" height="0.60" fill="#333" opacity="0.85"/><rect x="135.50" y="425.08" width="40.50" height="0.60" fill="#333" opacity="0.85"/><rect x="136.20" y="425.98" width="8.62" height="1.00" fill="#333" opacity="0.7"/><rect x="165.80" y="425.98" width="3.16" height="1.00" fill="#333" opacity="0.6"/><rect x="154.45" y="364.20" width="0.50" height="61.80" fill="#444" opacity="0.9"/><rect x="159.95" y="364.20" width="0.50" height="61.80" fill="#444" opacity="0.9"/><rect x="164.95" y="364.20" width="0.50" height="61.80" fill="#444" opacity="0.9"/><rect x="135.30" y="364.20" width="0.50" height="61.80" fill="#444" opacity="1"/><rect x="176.00" y="364.20" width="19.00" height="61.80" fill="#fff" opacity="1"/><rect x="176.00" y="364.20" width="1.20" height="61.80" fill="#2a2c33" opacity="1"/><rect x="177.20" y="364.20" width="5.30" height="13.30" fill="#2a2c33" opacity="1"/><rect x="182.50" y="364.20" width="12.50" height="2.00" fill="#2a2c33" opacity="1"/><rect x="176.50" y="377.50" width="18.50" height="0.40" fill="#777" opacity="1"/><rect x="176.50" y="380.87" width="18.50" height="0.40" fill="#777" opacity="1"/><rect x="176.50" y="384.24" width="18.50" height="0.40" fill="#777" opacity="1"/><rect x="176.50" y="387.61" width="18.50" height="0.40" fill="#777" opacity="1"/><rect x="176.50" y="390.98" width="18.50" height="0.40" fill="#777" opacity="1"/><rect x="176.50" y="394.35" width="18.50" height="0.40" fill="#777" opacity="1"/><rect x="176.50" y="397.72" width="18.50" height="0.40" fill="#777" opacity="1"/><rect x="176.50" y="401.09" width="18.50" height="0.40" fill="#777" opacity="1"/><rect x="176.50" y="404.46" width="18.50" height="0.40" fill="#777" opacity="1"/><rect x="176.50" y="407.83" width="18.50" height="0.40" fill="#777" opacity="1"/><rect x="176.50" y="411.20" width="18.50" height="0.40" fill="#777" opacity="1"/><rect x="176.50" y="414.57" width="18.50" height="0.40" fill="#777" opacity="1"/><rect x="176.50" y="417.94" width="18.50" height="0.40" fill="#777" opacity="1"/><rect x="176.50" y="421.31" width="18.50" height="0.40" fill="#777" opacity="1"/><rect x="176.50" y="424.68" width="18.50" height="0.40" fill="#777" opacity="1"/><rect x="179.60" y="366.00" width="0.40" height="60.00" fill="#777" opacity="1"/><rect x="182.30" y="366.00" width="0.40" height="60.00" fill="#777" opacity="1"/><rect x="186.00" y="366.00" width="0.40" height="60.00" fill="#777" opacity="1"/><rect x="190.80" y="366.00" width="0.40" height="60.00" fill="#777" opacity="1"/><rect x="194.60" y="364.20" width="0.50" height="61.80" fill="#777" opacity="1"/><rect x="182.50" y="375.30" width="12.50" height="2.20" fill="#cfcfcf" opacity="1"/><rect x="88.60" y="425.80" width="106.40" height="0.60" fill="#2a2c33" opacity="1"/></svg><!--/TH-->
<div id="formclip" style="position:absolute;left:240px;top:221px;width:1282px;height:565px;overflow:hidden"><div style="position:absolute;left:-240px;top:-221px;width:1600px;height:860px">
<!--FORM-->
<!--THUMB-->
<svg class="a" style="left:537px;top:272px" width="33" height="21" viewBox="0 0 33 21">
<path d="M5.5 1.2 H31.5 L28.3 19.9 H1.5 L3.6 8.6 Z" fill="#2a2c33"/>
<path d="M5.2 1.5 C12 3 20 5 28.6 7.2 L28.2 8.4 C20 6.8 11 5.6 3.6 5.6 Z" fill="#fff"/>
<path d="M12.5 8 L15.2 12.2 L27.6 8.2 Z" fill="#fff"/>
<path d="M28.5 7.4 C29 9 27 11 22 13 C15 15.6 8 18 2.5 20 L4.2 20 C10 18.4 18 16.2 23.5 14 C28 12.2 30 10 29.2 7.4 Z" fill="#fff"/>
</svg>
<div class="t" id="t0" style="transform:scaleX(1.0343);left:572.2px;top:271.84px;font-size:9.4px;line-height:9.4px;color:#2a2c33;font-weight:700;font-style:italic;">UNITED STATES</div>
<div class="a" style="left:572px;top:282px;width:80px;height:1px;background:#8a8a8a;"></div>
<div class="t" id="t1" style="transform:scaleX(0.9849);left:570.6px;top:283.74px;font-size:9.4px;line-height:9.4px;color:#2a2c33;font-weight:700;font-style:italic;">POSTAL SERVICE</div>
<div class="a" style="left:652.3px;top:286.3px;width:6px;height:6px;border-radius:50%;background:#2a2c33;color:#fff;font-size:5px;line-height:6px;text-align:center;font-weight:bold">R</div>
<div class="t" id="t2" style="transform:scaleX(0.9675);left:944.5px;top:272.79px;font-size:18.2px;line-height:18.2px;color:#2a2c33;font-weight:700;font-style:normal;">Request for or Notification of Absence</div>
<div class="a" style="left:535px;top:296px;width:605px;height:2px;background:#2a2c33;"></div>
<div class="a" style="left:535px;top:328px;width:605px;height:1px;background:#7a7a7a;"></div>
<div class="a" style="left:535px;top:359px;width:605px;height:1px;background:#7a7a7a;"></div>
<div class="a" style="left:535px;top:392px;width:605px;height:1px;background:#7a7a7a;"></div>
<div class="a" style="left:799px;top:297px;width:1px;height:32px;background:#7a7a7a;"></div>
<div class="a" style="left:895px;top:297px;width:1px;height:64px;background:#7a7a7a;"></div>
<div class="a" style="left:895px;top:392.4px;width:1px;height:123.1px;background:#7a7a7a;"></div>
<div class="a" style="left:1013px;top:297px;width:1px;height:96px;background:#7a7a7a;"></div>
<div class="a" style="left:804px;top:329px;width:1px;height:64px;background:#7a7a7a;"></div>
<div class="a" style="left:950px;top:329px;width:1px;height:32px;background:#7a7a7a;"></div>
<div class="a" style="left:671px;top:361px;width:1px;height:154.5px;background:#7a7a7a;"></div>
<div class="t" id="t3" style="transform:scaleX(0.9639);left:538.8px;top:299.78px;font-size:9px;line-height:9px;color:#505050;font-weight:400;font-style:normal;">Employee's Name <i style="font-size:0.95em;letter-spacing:-0.3px">(Print last, first, MI)</i></div>
<div class="t" id="t4" style="transform:scaleX(0.9179);left:803.7px;top:299.78px;font-size:9px;line-height:9px;color:#505050;font-weight:400;font-style:normal;">Employee ID</div>
<div class="t" id="t5" style="transform:scaleX(0.9207);left:899.3px;top:299.78px;font-size:9px;line-height:9px;color:#505050;font-weight:400;font-style:normal;">Date Submitted <i style="font-size:0.95em;letter-spacing:-0.3px">(MM/DD/YYYY)</i></div>
<div class="t" id="t6" style="transform:scaleX(0.9507);left:1017px;top:299.78px;font-size:9px;line-height:9px;color:#505050;font-weight:400;font-style:normal;">No. of Hours Requested</div>
<div class="a" style="left:535.5px;top:306.4px;width:262.3px;height:22.1px;background:#d6e5fb;border:1px solid #a8c4f1;border-radius:2px"></div>
<div class="a" style="left:799.4px;top:306.4px;width:94.2px;height:25.9px;background:#d6e5fb;border:1px solid #a8c4f1;border-radius:3px"></div>
<div class="a" style="left:896.2px;top:306.3px;width:115.8px;height:26.1px;background:#d6e5fb;border:1px solid #a8c4f1;border-radius:3px"></div>
<div class="a" style="left:1013.8px;top:306.3px;width:123.7px;height:26.2px;background:#d6e5fb;border:1px solid #a8c4f1;border-radius:3px"></div>
<div class="t" id="t7" style="transform:scaleX(0.9537);left:538.8px;top:331.18px;font-size:9px;line-height:9px;color:#505050;font-weight:400;font-style:normal;">Installation <i style="font-size:0.95em;letter-spacing:-0.3px">(For postmaster's leave, show city, state, and ZIP Code)</i></div>
<div class="t" id="t8" style="transform:scaleX(0.9339);left:808.8px;top:331.18px;font-size:9px;line-height:9px;color:#505050;font-weight:400;font-style:normal;">N/S Day</div>
<div class="t" id="t9" style="transform:scaleX(0.9354);left:899.3px;top:331.18px;font-size:9px;line-height:9px;color:#505050;font-weight:400;font-style:normal;">Pay Loc. No.</div>
<div class="t" id="t10" style="transform:scaleX(0.9732);left:955px;top:331.18px;font-size:9px;line-height:9px;color:#505050;font-weight:400;font-style:normal;">D/A Code</div>
<div class="t" id="t11" style="transform:scaleX(0.9441);left:1017px;top:331.18px;font-size:9px;line-height:9px;color:#505050;font-weight:400;font-style:normal;">From: Date</div>
<div class="t" id="t12" style="transform:scaleX(0.9480);left:1103.3px;top:331.18px;font-size:9px;line-height:9px;color:#505050;font-weight:400;font-style:normal;">Hour</div>
<div class="a" style="left:535.5px;top:339.3px;width:268.4px;height:21px;background:#d6e5fb;border:1px solid #a8c4f1;border-radius:2px"></div>
<div class="a" style="left:806.2px;top:339.5px;width:87.4px;height:20.7px;background:#d6e5fb;border:1px solid #a8c4f1;border-radius:2px"></div>
<div class="a" style="left:895.8px;top:339.5px;width:54.1px;height:20.6px;background:#d6e5fb;border:1px solid #a8c4f1;border-radius:2px"></div>
<div class="a" style="left:951.6px;top:339.5px;width:58.9px;height:20.6px;background:#d6e5fb;border:1px solid #a8c4f1;border-radius:2px"></div>
<div class="a" style="left:1012.5px;top:339.5px;width:124.5px;height:20.6px;background:#d6e5fb;border:1px solid #a8c4f1;border-radius:2px"></div>
<div class="a" style="left:1079px;top:340.5px;width:1px;height:18.7px;background:#b9c9e3;"></div>
<div class="t" id="t13" style="transform:scaleX(0.9416);left:538.8px;top:363.58px;font-size:9px;line-height:9px;color:#505050;font-weight:400;font-style:normal;">Time of Call or Request</div>
<div class="t" id="t14" style="transform:scaleX(0.9523);left:675px;top:363.58px;font-size:9px;line-height:9px;color:#505050;font-weight:400;font-style:normal;">Scheduled Reporting Time</div>
<div class="t" id="t15" style="transform:scaleX(0.9411);left:808.8px;top:363.58px;font-size:9px;line-height:9px;color:#505050;font-weight:400;font-style:normal;">If Needed, Employee Can Be Reached At:</div>
<div class="t" id="t16" style="transform:scaleX(0.9405);left:1017px;top:363.58px;font-size:9px;line-height:9px;color:#505050;font-weight:400;font-style:normal;">Thru: Date</div>
<div class="t" id="t17" style="transform:scaleX(0.9480);left:1100.8px;top:363.58px;font-size:9px;line-height:9px;color:#505050;font-weight:400;font-style:normal;">Hour</div>
<div class="a" style="left:535.5px;top:371.3px;width:134.7px;height:21.2px;background:#d6e5fb;border:1px solid #a8c4f1;border-radius:2px"></div>
<div class="a" style="left:672.6px;top:371.4px;width:130.3px;height:21.1px;background:#d6e5fb;border:1px solid #a8c4f1;border-radius:2px"></div>
<div class="a" style="left:804.3px;top:371.2px;width:150.7px;height:19.2px;background:#d6e5fb;border:1px solid #a8c4f1;border-radius:2px"></div>
<div class="a" style="left:1012.5px;top:372px;width:124.5px;height:19.3px;background:#d6e5fb;border:1px solid #a8c4f1;border-radius:2px"></div>
<div class="a" style="left:1079px;top:373px;width:1px;height:17.3px;background:#b9c9e3;"></div>
<div class="a" style="left:956.7px;top:379.8px;width:11.8px;height:11.2px;border:1px solid #b3cdf4;border-radius:2.5px;background:#fff"></div>
<div class="a" style="left:958.2px;top:381px;width:9.2px;height:9px;border-left:1.7px solid #707070;border-bottom:1.7px solid #707070;border-top:1px solid #969696;border-right:1px solid #969696"></div>
<div class="t" id="t18" style="transform:scaleX(1.0452);left:970.5px;top:383.93px;font-size:7.4px;line-height:7.4px;color:#505050;font-weight:400;font-style:normal;">Do not call</div>
<div class="t" id="t19" style="transform:scaleX(0.9392);left:539px;top:395.58px;font-size:9px;line-height:9px;color:#505050;font-weight:400;font-style:normal;">Type of Absence</div>
<div class="t" id="t20" style="transform:scaleX(0.9462);left:674.9px;top:395.58px;font-size:9px;line-height:9px;color:#505050;font-weight:400;font-style:normal;">Documentation <i style="font-size:0.95em;letter-spacing:-0.3px">(For official use only)</i></div>
<div class="t" id="t21" style="transform:scaleX(0.9326);left:898.9px;top:395.28px;font-size:9px;line-height:9px;color:#505050;font-weight:400;font-style:normal;">Revised Schedule for <i style="font-size:0.95em;letter-spacing:-0.3px">(Date)</i></div>
<div class="t" id="t22" style="transform:scaleX(0.9522);left:1024.8px;top:395.28px;font-size:9px;line-height:9px;color:#505050;font-weight:400;font-style:normal;">Approved in Advance</div>
<div class="a" style="left:536.5px;top:406.1px;width:12.4px;height:11.8px;border:1px solid #b3cdf4;border-radius:2.5px;background:#fff"></div>
<div class="a" style="left:538px;top:407.3px;width:9.8px;height:9.6px;border-left:1.7px solid #707070;border-bottom:1.7px solid #707070;border-top:1px solid #969696;border-right:1px solid #969696"></div>
<div class="t" id="t23" style="transform:scaleX(0.9061);left:552.8px;top:408.48px;font-size:9px;line-height:9px;color:#505050;font-weight:400;font-style:normal;">Annual</div>
<div class="a" style="left:536.5px;top:419.4px;width:12.4px;height:11.8px;border:1px solid #b3cdf4;border-radius:2.5px;background:#fff"></div>
<div class="a" style="left:538px;top:420.6px;width:9.8px;height:9.6px;border-left:1.7px solid #707070;border-bottom:1.7px solid #707070;border-top:1px solid #969696;border-right:1px solid #969696"></div>
<div class="t" id="t24" style="transform:scaleX(0.9444);left:552.8px;top:422.28px;font-size:9px;line-height:9px;color:#505050;font-weight:400;font-style:normal;">Holiday/AL Lv Exch</div>
<div class="a" style="left:536.5px;top:432.5px;width:12.4px;height:11.8px;border:1px solid #b3cdf4;border-radius:2.5px;background:#fff"></div>
<div class="a" style="left:538px;top:433.7px;width:9.8px;height:9.6px;border-left:1.7px solid #707070;border-bottom:1.7px solid #707070;border-top:1px solid #969696;border-right:1px solid #969696"></div>
<div class="t" id="t25" style="transform:scaleX(0.9420);left:552.8px;top:435.08px;font-size:9px;line-height:9px;color:#505050;font-weight:400;font-style:normal;">Carrier 701 Route</div>
<div class="a" style="left:536.5px;top:445.5px;width:12.4px;height:11.8px;border:1px solid #b3cdf4;border-radius:2.5px;background:#fff"></div>
<div class="a" style="left:538px;top:446.7px;width:9.8px;height:9.6px;border-left:1.7px solid #707070;border-bottom:1.7px solid #707070;border-top:1px solid #969696;border-right:1px solid #969696"></div>
<div class="t" id="t26" style="transform:scaleX(0.9177);left:552.8px;top:448.18px;font-size:9px;line-height:9px;color:#505050;font-weight:400;font-style:normal;">LWOP <i style="font-size:0.95em;letter-spacing:-0.3px">(See reverse)</i></div>
<div class="a" style="left:536.5px;top:458.6px;width:12.4px;height:11.8px;border:1px solid #b3cdf4;border-radius:2.5px;background:#fff"></div>
<div class="a" style="left:538px;top:459.8px;width:9.8px;height:9.6px;border-left:1.7px solid #707070;border-bottom:1.7px solid #707070;border-top:1px solid #969696;border-right:1px solid #969696"></div>
<div class="t" id="t27" style="transform:scaleX(0.9230);left:552.8px;top:461.28px;font-size:9px;line-height:9px;color:#505050;font-weight:400;font-style:normal;">Sick <i style="font-size:0.95em;letter-spacing:-0.3px">(See reverse)</i></div>
<div class="a" style="left:536.5px;top:472.1px;width:12.4px;height:11.8px;border:1px solid #b3cdf4;border-radius:2.5px;background:#fff"></div>
<div class="a" style="left:538px;top:473.3px;width:9.8px;height:9.6px;border-left:1.7px solid #707070;border-bottom:1.7px solid #707070;border-top:1px solid #969696;border-right:1px solid #969696"></div>
<div class="t" id="t28" style="transform:scaleX(0.9355);left:552.8px;top:474.58px;font-size:9px;line-height:9px;color:#505050;font-weight:400;font-style:normal;">Late</div>
<div class="a" style="left:536.5px;top:485.2px;width:12.4px;height:11.8px;border:1px solid #b3cdf4;border-radius:2.5px;background:#fff"></div>
<div class="a" style="left:538px;top:486.4px;width:9.8px;height:9.6px;border-left:1.7px solid #707070;border-bottom:1.7px solid #707070;border-top:1px solid #969696;border-right:1px solid #969696"></div>
<div class="t" id="t29" style="transform:scaleX(0.9194);left:552.8px;top:488.08px;font-size:9px;line-height:9px;color:#505050;font-weight:400;font-style:normal;">COP <i style="font-size:0.95em;letter-spacing:-0.3px">(See reverse)</i></div>
<div class="a" style="left:536.5px;top:498.7px;width:12.4px;height:11.8px;border:1px solid #b3cdf4;border-radius:2.5px;background:#fff"></div>
<div class="a" style="left:538px;top:499.9px;width:9.8px;height:9.6px;border-left:1.7px solid #707070;border-bottom:1.7px solid #707070;border-top:1px solid #969696;border-right:1px solid #969696"></div>
<div class="t" id="t30" style="transform:scaleX(0.9149);left:552.8px;top:501.18px;font-size:9px;line-height:9px;color:#505050;font-weight:400;font-style:normal;">Other</div>
<div class="a" style="left:576.3px;top:496.9px;width:91.4px;height:17.8px;background:#d6e5fb;border:1px solid #a8c4f1;border-radius:2px"></div>
<div class="a" style="left:672.7px;top:408px;width:12.6px;height:12px;border:1px solid #b3cdf4;border-radius:2.5px;background:#fff"></div>
<div class="a" style="left:674.2px;top:409.2px;width:10px;height:9.8px;border-left:1.7px solid #707070;border-bottom:1.7px solid #707070;border-top:1px solid #969696;border-right:1px solid #969696"></div>
<div class="t" id="t31" style="transform:scaleX(0.9392);left:689.1px;top:410.48px;font-size:9px;line-height:9px;color:#505050;font-weight:400;font-style:normal;">FMLA Requested <i style="font-size:0.95em;letter-spacing:-0.3px">(Certification review – HRSSC)</i></div>
<div class="a" style="left:672.7px;top:423px;width:12.6px;height:12px;border:1px solid #b3cdf4;border-radius:2.5px;background:#fff"></div>
<div class="a" style="left:674.2px;top:424.2px;width:10px;height:9.8px;border-left:1.7px solid #707070;border-bottom:1.7px solid #707070;border-top:1px solid #969696;border-right:1px solid #969696"></div>
<div class="t" id="t32" style="transform:scaleX(0.9329);left:689.1px;top:425.68px;font-size:9px;line-height:9px;color:#505050;font-weight:400;font-style:normal;">For COP Leave <i style="font-size:0.95em;letter-spacing:-0.3px">(CA1 on file)</i></div>
<div class="a" style="left:672.7px;top:438.4px;width:12.6px;height:12px;border:1px solid #b3cdf4;border-radius:2.5px;background:#fff"></div>
<div class="a" style="left:674.2px;top:439.6px;width:10px;height:9.8px;border-left:1.7px solid #707070;border-bottom:1.7px solid #707070;border-top:1px solid #969696;border-right:1px solid #969696"></div>
<div class="t" id="t33" style="transform:scaleX(0.9464);left:686.3px;top:440.68px;font-size:9px;line-height:9px;color:#505050;font-weight:400;font-style:normal;">For Advanced Sick Leave <i style="font-size:0.95em;letter-spacing:-0.3px">(PS 1221 on file)</i></div>
<div class="a" style="left:672.7px;top:453.6px;width:12.6px;height:12px;border:1px solid #b3cdf4;border-radius:2.5px;background:#fff"></div>
<div class="a" style="left:674.2px;top:454.8px;width:10px;height:9.8px;border-left:1.7px solid #707070;border-bottom:1.7px solid #707070;border-top:1px solid #969696;border-right:1px solid #969696"></div>
<div class="t" id="t34" style="transform:scaleX(0.9306);left:689.1px;top:456.08px;font-size:9px;line-height:9px;color:#505050;font-weight:400;font-style:normal;">For Military Leave <i style="font-size:0.95em;letter-spacing:-0.3px">(Orders reviewed)</i></div>
<div class="a" style="left:672.7px;top:468.8px;width:12.6px;height:12px;border:1px solid #b3cdf4;border-radius:2.5px;background:#fff"></div>
<div class="a" style="left:674.2px;top:470px;width:10px;height:9.8px;border-left:1.7px solid #707070;border-bottom:1.7px solid #707070;border-top:1px solid #969696;border-right:1px solid #969696"></div>
<div class="t" id="t35" style="transform:scaleX(0.9413);left:689.1px;top:471.58px;font-size:9px;line-height:9px;color:#505050;font-weight:400;font-style:normal;">For Court Leave <i style="font-size:0.95em;letter-spacing:-0.3px">(Summons reviewed)</i></div>
<div class="a" style="left:672.7px;top:484px;width:12.6px;height:12px;border:1px solid #b3cdf4;border-radius:2.5px;background:#fff"></div>
<div class="a" style="left:674.2px;top:485.2px;width:10px;height:9.8px;border-left:1.7px solid #707070;border-bottom:1.7px solid #707070;border-top:1px solid #969696;border-right:1px solid #969696"></div>
<div class="t" id="t36" style="transform:scaleX(0.9365);left:689.1px;top:486.98px;font-size:9px;line-height:9px;color:#505050;font-weight:400;font-style:normal;">For Higher Level <i style="font-size:0.95em;letter-spacing:-0.3px">(PS 1723 on file)</i></div>
<div class="a" style="left:672.7px;top:499px;width:12.6px;height:12px;border:1px solid #b3cdf4;border-radius:2.5px;background:#fff"></div>
<div class="a" style="left:674.2px;top:500.2px;width:10px;height:9.8px;border-left:1.7px solid #707070;border-bottom:1.7px solid #707070;border-top:1px solid #969696;border-right:1px solid #969696"></div>
<div class="t" id="t37" style="transform:scaleX(0.9105);left:689.1px;top:501.28px;font-size:9px;line-height:9px;color:#505050;font-weight:400;font-style:normal;">Scheme Training Testing Qualifying <i style="font-size:0.95em;letter-spacing:-0.3px">(Memo on file)</i></div>
<div class="a" style="left:896.9px;top:403.2px;width:114.7px;height:19.7px;background:#d6e5fb;border:1px solid #a8c4f1;border-radius:2px"></div>
<div class="a" style="left:895px;top:423px;width:245px;height:1px;background:#7a7a7a;"></div>
<div class="a" style="left:895px;top:446px;width:245px;height:1px;background:#7a7a7a;"></div>
<div class="a" style="left:895px;top:469px;width:245px;height:1px;background:#7a7a7a;"></div>
<div class="a" style="left:895px;top:492px;width:245px;height:1px;background:#7a7a7a;"></div>
<div class="a" style="left:1013px;top:393px;width:1px;height:31px;background:#7a7a7a;"></div>
<div class="a" style="left:1013px;top:446.6px;width:1px;height:23.1px;background:#7a7a7a;"></div>
<div class="a" style="left:896.9px;top:424.6px;width:241.3px;height:21.4px;background:#d6e5fb;border:1px solid #a8c4f1;border-radius:2px"></div>
<div class="a" style="left:896.9px;top:447.4px;width:115.1px;height:21.9px;background:#d6e5fb;border:1px solid #a8c4f1;border-radius:2px"></div>
<div class="a" style="left:1015px;top:447.4px;width:123.2px;height:21.9px;background:#d6e5fb;border:1px solid #a8c4f1;border-radius:2px"></div>
<div class="a" style="left:896.9px;top:470.7px;width:241.3px;height:21.4px;background:#d6e5fb;border:1px solid #a8c4f1;border-radius:2px"></div>
<div class="a" style="left:896.9px;top:493.8px;width:241.3px;height:21.1px;background:#d6e5fb;border:1px solid #a8c4f1;border-radius:2px"></div>
<div class="t" id="t38" style="transform:scaleX(1.0339);left:899.4px;top:426.66px;font-size:8.2px;line-height:8.2px;color:#c2d2ea;font-weight:400;font-style:normal;">Begin Work</div>
<div class="t" id="t39" style="transform:scaleX(1.0481);left:899.4px;top:449.86px;font-size:8.2px;line-height:8.2px;color:#c2d2ea;font-weight:400;font-style:normal;">Lunch Out</div>
<div class="t" id="t40" style="transform:scaleX(1.0502);left:1017px;top:449.86px;font-size:8.2px;line-height:8.2px;color:#c2d2ea;font-weight:400;font-style:normal;">Lunch In</div>
<div class="t" id="t41" style="transform:scaleX(1.0224);left:899.4px;top:472.56px;font-size:8.2px;line-height:8.2px;color:#c2d2ea;font-weight:400;font-style:normal;">End Work</div>
<div class="t" id="t42" style="transform:scaleX(1.0284);left:899.4px;top:495.86px;font-size:8.2px;line-height:8.2px;color:#c2d2ea;font-weight:400;font-style:normal;">Total Hours</div>
<div class="a" style="left:1021.2px;top:408.3px;width:12.2px;height:11.6px;border:1px solid #b3cdf4;border-radius:2.5px;background:#fff"></div>
<div class="a" style="left:1022.7px;top:409.5px;width:9.6px;height:9.4px;border-left:1.7px solid #707070;border-bottom:1.7px solid #707070;border-top:1px solid #969696;border-right:1px solid #969696"></div>
<div class="t" id="t43" style="transform:scaleX(0.9191);left:1038.6px;top:410.28px;font-size:9px;line-height:9px;color:#505050;font-weight:400;font-style:normal;">Yes</div>
<div class="a" style="left:1073.2px;top:408.3px;width:12.2px;height:11.6px;border:1px solid #b3cdf4;border-radius:2.5px;background:#fff"></div>
<div class="a" style="left:1074.7px;top:409.5px;width:9.6px;height:9.4px;border-left:1.7px solid #707070;border-bottom:1.7px solid #707070;border-top:1px solid #969696;border-right:1px solid #969696"></div>
<div class="t" id="t44" style="transform:scaleX(0.9465);left:1091px;top:410.28px;font-size:9px;line-height:9px;color:#505050;font-weight:400;font-style:normal;">No</div>
<div class="a" style="left:535px;top:515px;width:605px;height:1px;background:#7a7a7a;"></div>
<div class="t" id="t45" style="transform:scaleX(0.9562);left:539px;top:518.38px;font-size:9px;line-height:9px;color:#505050;font-weight:400;font-style:normal;">Remarks <i style="font-size:0.95em;letter-spacing:-0.3px">(Do not enter medical information. See Privacy Act Statement on reverse of this form.)</i></div>
<div class="a" style="left:535.4px;top:529.4px;width:603.1px;height:35.4px;background:#d6e5fb;border:1px solid #a8c4f1;border-radius:2px"></div>
<div class="a" style="left:535px;top:565.5px;width:605px;height:13.5px;background:#d6d6d6;"></div>
<div class="a" style="left:535px;top:579px;width:605px;height:1px;background:#2a2c33;"></div>
<div class="t" id="t46" style="transform:scaleX(1.0159);left:537.8px;top:567.63px;font-size:9.3px;line-height:9.3px;color:#2e2e2e;font-weight:700;font-style:normal;">I understand that the annual leave authorized in excess of the amount available to me during the leave year will be charged to LWOP.</div>
<div class="a" style="left:535px;top:580.1px;width:605px;height:37.9px;background:linear-gradient(180deg,#fff 0%,#fff 40%,#ededed 100%);"></div>
<div class="a" style="left:735px;top:580px;width:1px;height:38px;background:#7a7a7a;"></div>
<div class="a" style="left:937px;top:580px;width:1px;height:38px;background:#7a7a7a;"></div>
<div class="t" id="t47" style="transform:scaleX(0.9934);left:538.9px;top:582.28px;font-size:9px;line-height:9px;color:#2e2e2e;font-weight:700;font-style:normal;">Employee's Signature and Date</div>
<div class="t" id="t48" style="transform:scaleX(0.9031);left:740.5px;top:582.28px;font-size:9px;line-height:9px;color:#2e2e2e;font-weight:700;font-style:normal;">Signature of Person Recording Absence and Date</div>
<div class="t" id="t49" style="transform:scaleX(1.0004);left:949.9px;top:582.28px;font-size:9px;line-height:9px;color:#2e2e2e;font-weight:700;font-style:normal;">Signature of Supervisor and Date Notified</div>
<div class="a" style="left:534.3px;top:594.2px;width:114.5px;height:23.7px;background:#d6e5fb;border:1px solid #a8c4f1;border-radius:1px"></div>
<svg class="a" style="left:553.3px;top:596.9px" width="17" height="19" viewBox="0 0 17 19"><g fill="none" stroke="#4a5060" stroke-linecap="round" stroke-linejoin="round" stroke-width="1.5">
<path d="M1.2 13.2 L3.8 4.6 L9.3 2.5 L10.6 1.1 L14.7 5.2 L13 6.4 L10.6 11.2 Z"/>
<path d="M9.3 2.5 L13 6.4"/>
<path d="M1.8 12.6 L7.8 7.2" stroke-width="1.3"/>
<path d="M1.2 15.2 H5 L6.6 17.3 H13"/>
</g></svg>
<div class="t" id="t50" style="transform:scaleX(0.9313);left:575.2px;top:599.38px;font-size:13.6px;line-height:13.6px;color:#6a7182;font-weight:400;font-style:normal;">Sign Field</div>
<div class="a" style="left:650.4px;top:598.2px;width:84.8px;height:17.8px;background:#d6e5fb;border:1px solid #a8c4f1;border-radius:2px"></div>
<svg class="a" style="left:722.2px;top:603.7px" width="11" height="11" viewBox="0 0 11 11"><g fill="none" stroke="#6b7180" stroke-width="1"><rect x="0.6" y="1.6" width="9.8" height="8.8" rx="0.8"/><path d="M0.6 3.8 H10.4 M3 0.4 V2.2 M8 0.4 V2.2"/></g><g fill="#6b7180"><rect x="2.2" y="5.2" width="1.4" height="1.3"/><rect x="4.8" y="5.2" width="1.4" height="1.3"/><rect x="7.4" y="5.2" width="1.4" height="1.3"/><rect x="2.2" y="7.6" width="1.4" height="1.3"/><rect x="4.8" y="7.6" width="1.4" height="1.3"/><rect x="7.4" y="7.6" width="1.4" height="1.3"/></g></svg>
<div class="a" style="left:736.5px;top:593.5px;width:113.7px;height:23.3px;background:#d6e5fb;border:1px solid #a8c4f1;border-radius:1px"></div>
<svg class="a" style="left:754.9px;top:595.8px" width="17" height="19" viewBox="0 0 17 19"><g fill="none" stroke="#4a5060" stroke-linecap="round" stroke-linejoin="round" stroke-width="1.5">
<path d="M1.2 13.2 L3.8 4.6 L9.3 2.5 L10.6 1.1 L14.7 5.2 L13 6.4 L10.6 11.2 Z"/>
<path d="M9.3 2.5 L13 6.4"/>
<path d="M1.8 12.6 L7.8 7.2" stroke-width="1.3"/>
<path d="M1.2 15.2 H5 L6.6 17.3 H13"/>
</g></svg>
<div class="t" id="t51" style="transform:scaleX(0.9412);left:776.7px;top:598.28px;font-size:13.6px;line-height:13.6px;color:#6a7182;font-weight:400;font-style:normal;">Sign Field</div>
<div class="a" style="left:852px;top:598.5px;width:83px;height:17.7px;background:#d6e5fb;border:1px solid #a8c4f1;border-radius:2px"></div>
<svg class="a" style="left:922px;top:604px" width="11" height="11" viewBox="0 0 11 11"><g fill="none" stroke="#6b7180" stroke-width="1"><rect x="0.6" y="1.6" width="9.8" height="8.8" rx="0.8"/><path d="M0.6 3.8 H10.4 M3 0.4 V2.2 M8 0.4 V2.2"/></g><g fill="#6b7180"><rect x="2.2" y="5.2" width="1.4" height="1.3"/><rect x="4.8" y="5.2" width="1.4" height="1.3"/><rect x="7.4" y="5.2" width="1.4" height="1.3"/><rect x="2.2" y="7.6" width="1.4" height="1.3"/><rect x="4.8" y="7.6" width="1.4" height="1.3"/><rect x="7.4" y="7.6" width="1.4" height="1.3"/></g></svg>
<div class="a" style="left:936.8px;top:594.2px;width:114.7px;height:23.1px;background:#d6e5fb;border:1px solid #a8c4f1;border-radius:1px"></div>
<svg class="a" style="left:955.8px;top:596px" width="17" height="19" viewBox="0 0 17 19"><g fill="none" stroke="#4a5060" stroke-linecap="round" stroke-linejoin="round" stroke-width="1.5">
<path d="M1.2 13.2 L3.8 4.6 L9.3 2.5 L10.6 1.1 L14.7 5.2 L13 6.4 L10.6 11.2 Z"/>
<path d="M9.3 2.5 L13 6.4"/>
<path d="M1.8 12.6 L7.8 7.2" stroke-width="1.3"/>
<path d="M1.2 15.2 H5 L6.6 17.3 H13"/>
</g></svg>
<div class="t" id="t52" style="transform:scaleX(0.9313);left:977.2px;top:598.48px;font-size:13.6px;line-height:13.6px;color:#6a7182;font-weight:400;font-style:normal;">Sign Field</div>
<div class="a" style="left:1052px;top:598.9px;width:85px;height:17.6px;background:#d6e5fb;border:1px solid #a8c4f1;border-radius:2px"></div>
<svg class="a" style="left:1124px;top:604.4px" width="11" height="11" viewBox="0 0 11 11"><g fill="none" stroke="#6b7180" stroke-width="1"><rect x="0.6" y="1.6" width="9.8" height="8.8" rx="0.8"/><path d="M0.6 3.8 H10.4 M3 0.4 V2.2 M8 0.4 V2.2"/></g><g fill="#6b7180"><rect x="2.2" y="5.2" width="1.4" height="1.3"/><rect x="4.8" y="5.2" width="1.4" height="1.3"/><rect x="7.4" y="5.2" width="1.4" height="1.3"/><rect x="2.2" y="7.6" width="1.4" height="1.3"/><rect x="4.8" y="7.6" width="1.4" height="1.3"/><rect x="7.4" y="7.6" width="1.4" height="1.3"/></g></svg>
<div class="a" style="left:535px;top:618.2px;width:605px;height:18.2px;background:#2a2c33;"></div>
<div class="t" id="t53" style="transform:scaleX(1.0034);left:541px;top:622.33px;font-size:10px;line-height:10px;color:#fff;font-weight:700;font-style:normal;">Official Action on Application <i>(Return copy of signed request to employee.)</i></div>
<div class="a" style="left:538.4px;top:639px;width:12.7px;height:12.1px;border:1px solid #b3cdf4;border-radius:2.5px;background:#fff"></div>
<div class="a" style="left:539.9px;top:640.2px;width:10.1px;height:9.9px;border-left:1.7px solid #707070;border-bottom:1.7px solid #707070;border-top:1px solid #969696;border-right:1px solid #969696"></div>
<div class="t" id="t54" style="transform:scaleX(0.9888);left:555.4px;top:642.28px;font-size:9px;line-height:9px;color:#505050;font-weight:400;font-style:normal;">Approved</div>
<div class="a" style="left:538.4px;top:657.6px;width:12.7px;height:12.1px;border:1px solid #b3cdf4;border-radius:2.5px;background:#fff"></div>
<div class="a" style="left:539.9px;top:658.8px;width:10.1px;height:9.9px;border-left:1.7px solid #707070;border-bottom:1.7px solid #707070;border-top:1px solid #969696;border-right:1px solid #969696"></div>
<div class="t" id="t55" style="transform:scaleX(0.9627);left:555.4px;top:660.68px;font-size:9px;line-height:9px;color:#505050;font-weight:400;font-style:normal;">Disapproved (Give reason below)</div>
<div class="a" style="left:735px;top:636.4px;width:1px;height:76.6px;background:#7a7a7a;"></div>
<div class="a" style="left:935px;top:636.4px;width:1px;height:76.6px;background:#7a7a7a;"></div>
<div class="t" id="t56" style="transform:scaleX(0.9831);left:741px;top:639.78px;font-size:9px;line-height:9px;color:#505050;font-weight:400;font-style:normal;">Do not check an FMLA box until you verify the</div>
<div class="t" id="t57" style="transform:scaleX(0.9792);left:741px;top:650.28px;font-size:9px;line-height:9px;color:#505050;font-weight:400;font-style:normal;">FMLA designation.</div>
<div class="a" style="left:739.2px;top:662.8px;width:12.7px;height:12.1px;border:1px solid #b3cdf4;border-radius:2.5px;background:#fff"></div>
<div class="a" style="left:740.7px;top:664px;width:10.1px;height:9.9px;border-left:1.7px solid #707070;border-bottom:1.7px solid #707070;border-top:1px solid #969696;border-right:1px solid #969696"></div>
<div class="t" id="t58" style="transform:scaleX(0.9623);left:755.7px;top:666.78px;font-size:9px;line-height:9px;color:#505050;font-weight:400;font-style:normal;">FMLA Designation is PENDING</div>
<div class="a" style="left:739.2px;top:678.6px;width:12.7px;height:12.1px;border:1px solid #b3cdf4;border-radius:2.5px;background:#fff"></div>
<div class="a" style="left:740.7px;top:679.8px;width:10.1px;height:9.9px;border-left:1.7px solid #707070;border-bottom:1.7px solid #707070;border-top:1px solid #969696;border-right:1px solid #969696"></div>
<div class="t" id="t59" style="transform:scaleX(0.9840);left:755.7px;top:682.48px;font-size:9px;line-height:9px;color:#505050;font-weight:400;font-style:normal;">FMLA Protected</div>
<div class="a" style="left:739.2px;top:694.9px;width:12.7px;height:12.1px;border:1px solid #b3cdf4;border-radius:2.5px;background:#fff"></div>
<div class="a" style="left:740.7px;top:696.1px;width:10.1px;height:9.9px;border-left:1.7px solid #707070;border-bottom:1.7px solid #707070;border-top:1px solid #969696;border-right:1px solid #969696"></div>
<div class="t" id="t60" style="transform:scaleX(0.9945);left:755.7px;top:697.48px;font-size:9px;line-height:9px;color:#505050;font-weight:400;font-style:normal;">Not FMLA Protected</div>
<div class="t" id="t61" style="transform:scaleX(0.9331);left:941.6px;top:639.22px;font-size:8.6px;line-height:8.6px;color:#2e2e2e;font-weight:700;font-style:normal;">Signature of Supervisor and Date</div>
<div class="a" style="left:937.5px;top:650.5px;width:197.7px;height:26.9px;background:#d6e5fb;border:1px solid #a8c4f1;border-radius:1px"></div>
<svg class="a" style="left:997.5px;top:654.4px" width="17" height="19" viewBox="0 0 17 19"><g fill="none" stroke="#4a5060" stroke-linecap="round" stroke-linejoin="round" stroke-width="1.5">
<path d="M1.2 13.2 L3.8 4.6 L9.3 2.5 L10.6 1.1 L14.7 5.2 L13 6.4 L10.6 11.2 Z"/>
<path d="M9.3 2.5 L13 6.4"/>
<path d="M1.8 12.6 L7.8 7.2" stroke-width="1.3"/>
<path d="M1.2 15.2 H5 L6.6 17.3 H13"/>
</g></svg>
<div class="t" id="t62" style="transform:scaleX(0.9313);left:1019.5px;top:656.88px;font-size:13.6px;line-height:13.6px;color:#6a7182;font-weight:400;font-style:normal;">Sign Field</div>
<div class="a" style="left:935.5px;top:677px;width:202.5px;height:1px;background:#7a7a7a;"></div>
<div class="a" style="left:941px;top:688.6px;width:12.2px;height:11.6px;border:1px solid #b3cdf4;border-radius:2.5px;background:#fff"></div>
<div class="a" style="left:942.5px;top:689.8px;width:9.6px;height:9.4px;border-left:1.7px solid #707070;border-bottom:1.7px solid #707070;border-top:1px solid #969696;border-right:1px solid #969696"></div>
<div class="t" id="t63" style="transform:scaleX(0.9560);left:957px;top:691.01px;font-size:9.2px;line-height:9.2px;color:#2e2e2e;font-weight:700;font-style:italic;">Continued on reverse</div>
<div class="a" style="left:535px;top:712px;width:730.5px;height:2px;background:#2a2c33;"></div>
<div class="a" style="left:1139px;top:296px;width:2px;height:417px;background:#2a2c33;"></div>
<div class="a" style="left:1141px;top:296px;width:31.6px;height:100.3px;background:#2a2c33;"></div>
<div class="a" style="left:1156px;top:297px;width:2px;height:99.3px;background:#9a9a9a;"></div>
<div class="a" style="left:1172.6px;top:296px;width:93px;height:15.2px;background:#2a2c33;"></div>
<div class="a" style="left:1196px;top:297.5px;width:1px;height:13.7px;background:#9a9a9a;"></div>
<div class="a" style="left:1196px;top:311px;width:1px;height:67.8px;background:#9a9a9a;"></div>
<div class="a" style="left:1264px;top:311px;width:1px;height:402px;background:#8a8a8a;"></div>
<div class="a" style="left:1172.6px;top:378.8px;width:92.4px;height:17.5px;background:#d9d9d9;"></div>
<div class="a" style="left:1172.6px;top:378px;width:92.9px;height:1px;background:#9a9a9a;"></div>
<div class="a" style="left:1196px;top:378.8px;width:1px;height:334.2px;background:#9a9a9a;"></div>
<div class="a" style="left:1230px;top:378.8px;width:1px;height:334.2px;background:#9a9a9a;"></div>
<div class="a" style="left:1172px;top:396.3px;width:1px;height:316.7px;background:#9a9a9a;"></div>
<div class="a" style="left:1156px;top:396.3px;width:1px;height:316.7px;background:#9a9a9a;"></div>
<div class="a" style="left:1141px;top:396px;width:124.5px;height:1px;background:#9a9a9a;"></div>
<div class="a" style="left:1173px;top:399.7px;width:24px;text-align:center;font-size:8.2px;line-height:8.2px;color:#555;letter-spacing:-0.3px">Sat<br>01</div>
<div class="a" style="left:1141px;top:418px;width:124.5px;height:1px;background:#9a9a9a;"></div>
<div class="a" style="left:1173px;top:422.26px;width:24px;text-align:center;font-size:8.2px;line-height:8.2px;color:#555;letter-spacing:-0.3px">Sun<br>02</div>
<div class="a" style="left:1141px;top:441px;width:124.5px;height:1px;background:#9a9a9a;"></div>
<div class="a" style="left:1173px;top:444.83px;width:24px;text-align:center;font-size:8.2px;line-height:8.2px;color:#555;letter-spacing:-0.3px">Mon<br>03</div>
<div class="a" style="left:1141px;top:463px;width:124.5px;height:1px;background:#9a9a9a;"></div>
<div class="a" style="left:1173px;top:467.39px;width:24px;text-align:center;font-size:8.2px;line-height:8.2px;color:#555;letter-spacing:-0.3px">Tue<br>04</div>
<div class="a" style="left:1141px;top:486px;width:124.5px;height:1px;background:#9a9a9a;"></div>
<div class="a" style="left:1173px;top:489.96px;width:24px;text-align:center;font-size:8.2px;line-height:8.2px;color:#555;letter-spacing:-0.3px">Wed<br>05</div>
<div class="a" style="left:1141px;top:509px;width:124.5px;height:1px;background:#9a9a9a;"></div>
<div class="a" style="left:1173px;top:512.52px;width:24px;text-align:center;font-size:8.2px;line-height:8.2px;color:#555;letter-spacing:-0.3px">Thur<br>06</div>
<div class="a" style="left:1141px;top:531px;width:124.5px;height:1px;background:#9a9a9a;"></div>
<div class="a" style="left:1173px;top:535.09px;width:24px;text-align:center;font-size:8.2px;line-height:8.2px;color:#555;letter-spacing:-0.3px">Fri<br>07</div>
<div class="a" style="left:1141px;top:554px;width:124.5px;height:1px;background:#9a9a9a;"></div>
<div class="a" style="left:1173px;top:557.65px;width:24px;text-align:center;font-size:8.2px;line-height:8.2px;color:#555;letter-spacing:-0.3px">Sat<br>08</div>
<div class="a" style="left:1141px;top:576px;width:124.5px;height:1px;background:#9a9a9a;"></div>
<div class="a" style="left:1173px;top:580.21px;width:24px;text-align:center;font-size:8.2px;line-height:8.2px;color:#555;letter-spacing:-0.3px">Sun<br>09</div>
<div class="a" style="left:1141px;top:599px;width:124.5px;height:1px;background:#9a9a9a;"></div>
<div class="a" style="left:1173px;top:602.78px;width:24px;text-align:center;font-size:8.2px;line-height:8.2px;color:#555;letter-spacing:-0.3px">Mon<br>10</div>
<div class="a" style="left:1141px;top:621px;width:124.5px;height:1px;background:#9a9a9a;"></div>
<div class="a" style="left:1173px;top:625.34px;width:24px;text-align:center;font-size:8.2px;line-height:8.2px;color:#555;letter-spacing:-0.3px">Tue<br>11</div>
<div class="a" style="left:1141px;top:644px;width:124.5px;height:1px;background:#9a9a9a;"></div>
<div class="a" style="left:1173px;top:647.91px;width:24px;text-align:center;font-size:8.2px;line-height:8.2px;color:#555;letter-spacing:-0.3px">Wed<br>12</div>
<div class="a" style="left:1141px;top:667px;width:124.5px;height:1px;background:#9a9a9a;"></div>
<div class="a" style="left:1173px;top:670.47px;width:24px;text-align:center;font-size:8.2px;line-height:8.2px;color:#555;letter-spacing:-0.3px">Thur<br>13</div>
<div class="a" style="left:1141px;top:689px;width:124.5px;height:1px;background:#9a9a9a;"></div>
<div class="a" style="left:1173px;top:693.04px;width:24px;text-align:center;font-size:8.2px;line-height:8.2px;color:#555;letter-spacing:-0.3px">Fri<br>14</div>
<div class="t" id="t64" style="transform:scaleX(0.9737);left:1178.8px;top:299.88px;font-size:9px;line-height:9px;color:#fff;font-weight:700;font-style:normal;">PP</div>
<div class="t" id="t65" style="transform:scaleX(1.0089);left:1203.3px;top:299.88px;font-size:9px;line-height:9px;color:#fff;font-weight:700;font-style:normal;">Year</div>
<div class="t" id="t66" style="transform:scaleX(0.8780);left:1178.8px;top:381.78px;font-size:9px;line-height:9px;color:#2e2e2e;font-weight:700;font-style:normal;">Day</div>
<div class="t" id="t67" style="transform:scaleX(0.8750);left:1207.2px;top:381.78px;font-size:9px;line-height:9px;color:#2e2e2e;font-weight:700;font-style:normal;">Init.</div>
<div class="t" id="t68" style="transform:scaleX(0.9302);left:1236.5px;top:381.78px;font-size:9px;line-height:9px;color:#2e2e2e;font-weight:700;font-style:normal;">Hours</div>
<div class="a" style="left:1143.5px;top:366px;width:65px;height:12px;transform:rotate(-90deg);transform-origin:0 0;font-size:9.2px;line-height:12px;font-weight:bold;color:#fff;letter-spacing:1.35px;white-space:nowrap">SCHEDULED</div>
<div class="a" style="left:1160px;top:381.5px;width:80px;height:12px;transform:rotate(-90deg);transform-origin:0 0;font-size:9.2px;line-height:12px;font-weight:bold;color:#fff;letter-spacing:1.1px;white-space:nowrap">UNSCHEDULED</div>
<div class="t" id="t69" style="transform:scaleX(0.9212);left:535px;top:717.78px;font-size:11.6px;line-height:11.6px;color:#4a4a4a;font-weight:400;font-style:normal;">PS Form <b>3971</b>, December 2011 <i>(Page 1 of 2)</i> PSN 7530-02-000-9136</div>
<div class="t" id="t70" style="transform:scaleX(1.0352);left:905px;top:718.66px;font-size:8.9px;line-height:8.9px;color:#4a4a4a;font-weight:400;font-style:normal;"><b>Warning:</b> The furnishing of false information on this form may result in a fine of not more</div>
<div class="t" id="t71" style="transform:scaleX(1.0465);left:905px;top:728.66px;font-size:8.9px;line-height:8.9px;color:#4a4a4a;font-weight:400;font-style:normal;">than $10,000 or imprisonment of not more that 5 years, or both <i>(18 U.S.C. 1001).</i></div>
<div class="a" style="left:535px;top:771px;width:730.5px;height:2px;background:#2a2c33;"></div>
<div class="t" id="t72" style="transform:scaleX(0.9936);left:540.6px;top:775.69px;font-size:10.4px;line-height:10.4px;color:#2e2e2e;font-weight:700;font-style:normal;">Reason I was incapacitated for duty during this absence:</div>
<div class="a" style="left:859.3px;top:773px;width:280px;height:17px;background:#d9d9d9;"></div>
<div class="a" style="left:859px;top:773px;width:1px;height:17px;background:#444;"></div>
<div class="a" style="left:989px;top:773px;width:1px;height:17px;background:#444;"></div>
<div class="a" style="left:1028px;top:773px;width:1px;height:17px;background:#444;"></div>
<div class="a" style="left:1067px;top:773px;width:1px;height:17px;background:#444;"></div>
<div class="t" id="t73" style="transform:scaleX(0.9472);left:862.5px;top:775.18px;font-size:9px;line-height:9px;color:#2e2e2e;font-weight:700;font-style:normal;">Leave Types and Codes</div>
<div class="t" id="t74" style="transform:scaleX(0.8828);left:992.6px;top:775.18px;font-size:9px;line-height:9px;color:#2e2e2e;font-weight:700;font-style:normal;">Time</div>
<div class="t" id="t75" style="transform:scaleX(0.9200);left:1031px;top:775.18px;font-size:9px;line-height:9px;color:#2e2e2e;font-weight:700;font-style:normal;">FMLA</div>
<div class="t" id="t76" style="transform:scaleX(0.9465);left:1070.5px;top:775.18px;font-size:9px;line-height:9px;color:#2e2e2e;font-weight:700;font-style:normal;">Time Clock</div>
<div class="a" style="left:1139.3px;top:771px;width:126.4px;height:19px;background:#2a2c33;"></div>
<div class="a" style="left:1156px;top:773.5px;width:1px;height:16.5px;background:#9a9a9a;"></div>
<div class="a" style="left:1172px;top:773.5px;width:1px;height:16.5px;background:#9a9a9a;"></div>
<div class="a" style="left:1197px;top:773.5px;width:1px;height:16.5px;background:#9a9a9a;"></div>
<div class="t" id="t77" style="transform:scaleX(0.9737);left:1178.8px;top:775.58px;font-size:9px;line-height:9px;color:#fff;font-weight:700;font-style:normal;">PP</div>
<div class="t" id="t78" style="transform:scaleX(1.0089);left:1203.3px;top:775.58px;font-size:9px;line-height:9px;color:#fff;font-weight:700;font-style:normal;">Year</div>
<div class="a" style="left:1144px;top:776px;width:8px;height:4px;border:1.6px solid #fff;border-bottom:none;border-radius:4px 4px 0 0"></div>
<div class="a" style="left:1160.5px;top:776px;width:8px;height:4px;border:1.6px solid #fff;border-bottom:none;border-radius:4px 4px 0 0"></div>
<!--/FORM-->
</div></div>
</body></html>
